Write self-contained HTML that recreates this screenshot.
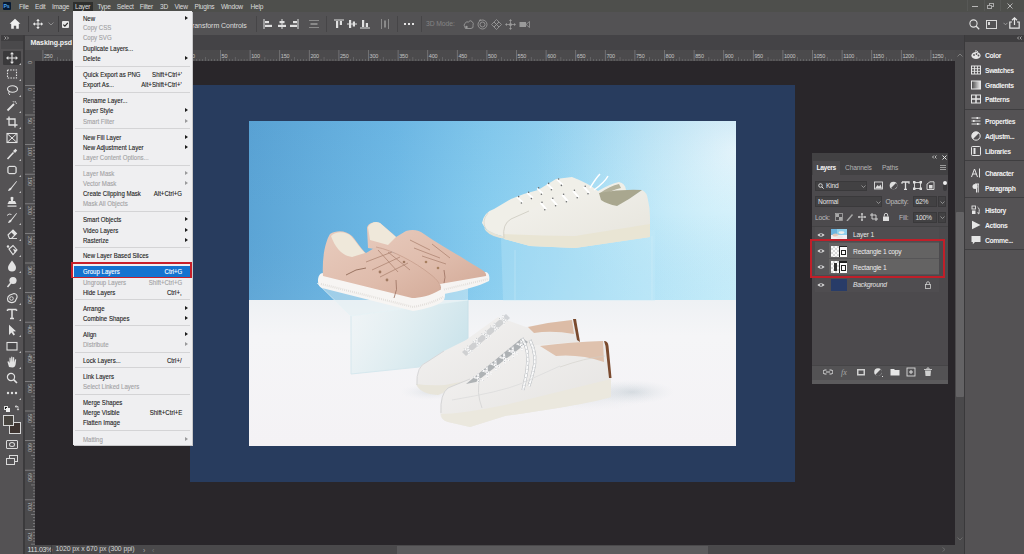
<!DOCTYPE html>
<html><head><meta charset="utf-8">
<style>
*{margin:0;padding:0;box-sizing:border-box}
html,body{width:1024px;height:554px;overflow:hidden;background:#29262a;font-family:"Liberation Sans",sans-serif;position:relative}
.a{position:absolute}
#menubar{left:0;top:0;width:1024px;height:12px;background:#4e4f4c}
#opts{left:0;top:12px;width:1024px;height:23px;background:#535254}
#tabbar{left:24px;top:35px;width:941px;height:15px;background:#444346}
#toolbar{left:0;top:35px;width:23px;height:519px;background:#545254}
#tbgap{left:23px;top:35px;width:2px;height:519px;background:#3b3a3c}
#hruler{left:25px;top:50px;width:939px;height:11px;background:#4b4a4c}
#vruler{left:25px;top:61px;width:10px;height:484px;background:#4b4a4c}
#canvas{left:35px;top:61px;width:920px;height:484px;background:#29262a}
#status{left:25px;top:545px;width:930px;height:9px;background:#4a494b}
#vscroll{left:955px;top:50px;width:9px;height:504px;background:#4a494b}
#vsep{left:964px;top:35px;width:1px;height:519px;background:#3a393b}
#rpanel{left:965px;top:42px;width:59px;height:512px;background:#545254}
#rhead{left:965px;top:35px;width:59px;height:7px;background:#3f3e40}
#doc{left:190px;top:85px;width:605px;height:397px;background:#283c5e}
#photo{left:249px;top:121px;width:487px;height:325px;overflow:hidden}
#menu{left:73px;top:11px;width:119px;height:434px;background:#efeff1;box-shadow:1px 1px 0 #c8c8ca}
.mi{position:absolute;left:10px;font-size:7.3px;transform:scaleX(.83);transform-origin:0 0;-webkit-text-stroke:0.12px currentColor;color:#1c1c1c;white-space:nowrap;line-height:10px;height:10px}
.mi.d,.sc.d{color:#a2a2a4}
.mi.w,.sc.w{color:#ffffff}
.sc{position:absolute;right:10px;font-size:7.3px;transform:scaleX(.83);transform-origin:100% 0;-webkit-text-stroke:0.12px currentColor;color:#1c1c1c;line-height:10px;white-space:nowrap}
.sep{position:absolute;left:2px;width:115px;height:1px;background:#d4d4d6}
.arr{position:absolute;left:112px;width:0;height:0;border-left:3px solid #1c1c1c;border-top:2.5px solid transparent;border-bottom:2.5px solid transparent}
.arr.d{border-left-color:#9a9a9c}
#layers{left:812px;top:153px;width:136px;height:231px;background:#4d4b4e}
.t{position:absolute;white-space:nowrap;line-height:1}

</style></head><body>
<div id="menubar" class="a"></div>
<div id="opts" class="a"></div>
<div id="tabbar" class="a"></div>
<div id="toolbar" class="a"></div>
<div id="tbgap" class="a"></div>
<div id="hruler" class="a"></div>
<div id="vruler" class="a"></div>
<div id="canvas" class="a"></div>
<div id="status" class="a"></div>
<div id="vscroll" class="a"></div>
<div id="vsep" class="a"></div>
<div id="rhead" class="a"></div>
<div id="rpanel" class="a"></div>
<div id="doc" class="a"></div>
<div class="a" style="left:3px;top:2px;width:8px;height:8px;background:#071a33;border-radius:1px"></div>
<div class="t" style="left:3.60px;top:4.34px;font-size:5.20px;color:#4fa6ee;font-weight:700;letter-spacing:-0.20px;">Ps</div>
<div class="t" style="left:19.00px;top:3.77px;font-size:6.60px;color:#dcdcdc;font-weight:400;letter-spacing:-0.25px;">File</div>
<div class="t" style="left:35.00px;top:3.77px;font-size:6.60px;color:#dcdcdc;font-weight:400;letter-spacing:-0.25px;">Edit</div>
<div class="t" style="left:52.00px;top:3.77px;font-size:6.60px;color:#dcdcdc;font-weight:400;letter-spacing:-0.25px;">Image</div>
<div class="t" style="left:97.40px;top:3.77px;font-size:6.60px;color:#dcdcdc;font-weight:400;letter-spacing:-0.25px;">Type</div>
<div class="t" style="left:116.80px;top:3.77px;font-size:6.60px;color:#dcdcdc;font-weight:400;letter-spacing:-0.25px;">Select</div>
<div class="t" style="left:139.80px;top:3.77px;font-size:6.60px;color:#dcdcdc;font-weight:400;letter-spacing:-0.25px;">Filter</div>
<div class="t" style="left:160.00px;top:3.77px;font-size:6.60px;color:#dcdcdc;font-weight:400;letter-spacing:-0.25px;">3D</div>
<div class="t" style="left:174.60px;top:3.77px;font-size:6.60px;color:#dcdcdc;font-weight:400;letter-spacing:-0.25px;">View</div>
<div class="t" style="left:194.50px;top:3.77px;font-size:6.60px;color:#dcdcdc;font-weight:400;letter-spacing:-0.25px;">Plugins</div>
<div class="t" style="left:220.90px;top:3.77px;font-size:6.60px;color:#dcdcdc;font-weight:400;letter-spacing:-0.25px;">Window</div>
<div class="t" style="left:250.50px;top:3.77px;font-size:6.60px;color:#dcdcdc;font-weight:400;letter-spacing:-0.25px;">Help</div>
<div class="a" style="left:73px;top:2px;width:20px;height:9px;background:#2e2f2d"></div>
<div class="t" style="left:75.00px;top:3.77px;font-size:6.60px;color:#dcdcdc;font-weight:400;letter-spacing:-0.25px;">Layer</div>
<div class="a" style="left:972px;top:6px;width:6px;height:1px;background:#b8b8b8"></div>
<div class="a" style="left:989px;top:3px;width:5px;height:4px;border:1px solid #a8a8a8"></div>
<div class="a" style="left:987px;top:5px;width:5px;height:4px;border:1px solid #a8a8a8;background:#4e4f4c"></div>
<svg class="a" style="left:1006px;top:2px" width="8" height="8"><path d="M1.5,1.5 L6.5,6.5 M6.5,1.5 L1.5,6.5" stroke="#c0c0c0" stroke-width="0.9"/></svg>
<div class="a" style="left:967px;top:0;width:1px;height:11px;background:#575856"></div>
<div class="a" style="left:984px;top:0;width:1px;height:11px;background:#575856"></div>
<div class="a" style="left:1000px;top:0;width:1px;height:11px;background:#575856"></div>
<svg class="a" style="left:9px;top:18px" width="12" height="12" viewBox="0 0 12 12"><path d="M6,0.8 L11.4,5.8 L9.8,5.8 L9.8,10.8 L7.2,10.8 L7.2,7.8 L4.8,7.8 L4.8,10.8 L2.2,10.8 L2.2,5.8 L0.6,5.8 Z" fill="#f0f0f0"/></svg>
<div class="a" style="left:28px;top:16px;width:1px;height:16px;background:#3f3e40"></div>
<svg class="a" style="left:33px;top:19px" width="10" height="10" viewBox="0 0 10 10"><path d="M5,0.5 L5,9.5 M0.5,5 L9.5,5" stroke="#e8e8e8" stroke-width="1"/><path d="M5,0 L3.2,2 L6.8,2 Z M5,10 L3.2,8 L6.8,8 Z M0,5 L2,3.2 L2,6.8 Z M10,5 L8,3.2 L8,6.8 Z" fill="#e8e8e8"/></svg>
<svg class="a" style="left:48px;top:22px" width="6" height="4"><path d="M0.5,0.5 L3,3 L5.5,0.5" stroke="#9a9a9a" stroke-width="0.8" fill="none"/></svg>
<div class="a" style="left:58px;top:16px;width:1px;height:16px;background:#3f3e40"></div>
<div class="a" style="left:62px;top:20.5px;width:7px;height:7px;background:#e8e8e8;border-radius:1px"></div>
<svg class="a" style="left:62px;top:20.5px" width="7" height="7"><path d="M1.3,3.6 L2.9,5.2 L5.8,1.8" stroke="#2a2a2a" stroke-width="1.2" fill="none"/></svg>
<div class="t" style="left:188.00px;top:21.65px;font-size:7.00px;color:#dedede;font-weight:400;letter-spacing:-0.05px;">Transform Controls</div>
<div class="a" style="left:255.5px;top:16px;width:1px;height:16px;background:#464547"></div>
<div class="a" style="left:326.0px;top:16px;width:1px;height:16px;background:#464547"></div>
<div class="a" style="left:397.0px;top:16px;width:1px;height:16px;background:#464547"></div>
<div class="a" style="left:421.0px;top:16px;width:1px;height:16px;background:#464547"></div>
<svg class="a" style="left:263px;top:19px" width="10" height="10" viewBox="0 0 10 10"><rect x="0.5" y="0" width="1" height="10" fill="#e0e0e0"/><rect x="2" y="2" width="4" height="2.2" fill="#e0e0e0"/><rect x="2" y="5.8" width="7" height="2.2" fill="#e0e0e0"/></svg>
<svg class="a" style="left:277px;top:19px" width="10" height="10" viewBox="0 0 10 10"><rect x="4.5" y="0" width="1" height="10" fill="#e0e0e0"/><rect x="2.5" y="2" width="5" height="2.2" fill="#e0e0e0"/><rect x="1" y="5.8" width="8" height="2.2" fill="#e0e0e0"/></svg>
<svg class="a" style="left:289px;top:19px" width="10" height="10" viewBox="0 0 10 10"><rect x="8.5" y="0" width="1" height="10" fill="#e0e0e0"/><rect x="4" y="2" width="4" height="2.2" fill="#e0e0e0"/><rect x="1" y="5.8" width="7" height="2.2" fill="#e0e0e0"/></svg>
<svg class="a" style="left:309px;top:19px" width="10" height="10" viewBox="0 0 10 10"><rect x="0" y="1" width="10" height="1" fill="#8a8a8a"/><rect x="1.5" y="4" width="7" height="2" fill="#8a8a8a"/><rect x="0" y="8" width="10" height="1" fill="#8a8a8a"/></svg>
<svg class="a" style="left:334px;top:19px" width="10" height="10" viewBox="0 0 10 10"><rect x="0" y="0.5" width="10" height="1" fill="#e0e0e0"/><rect x="2" y="2" width="2.2" height="7" fill="#e0e0e0"/><rect x="5.8" y="2" width="2.2" height="4" fill="#e0e0e0"/></svg>
<svg class="a" style="left:347px;top:19px" width="10" height="10" viewBox="0 0 10 10"><rect x="0" y="4.5" width="10" height="1" fill="#e0e0e0"/><rect x="2" y="1" width="2.2" height="8" fill="#e0e0e0"/><rect x="5.8" y="2.5" width="2.2" height="5" fill="#e0e0e0"/></svg>
<svg class="a" style="left:360px;top:19px" width="10" height="10" viewBox="0 0 10 10"><rect x="0" y="8.5" width="10" height="1" fill="#e0e0e0"/><rect x="2" y="1" width="2.2" height="7" fill="#e0e0e0"/><rect x="5.8" y="4" width="2.2" height="4" fill="#e0e0e0"/></svg>
<svg class="a" style="left:380px;top:19px" width="10" height="10" viewBox="0 0 10 10"><rect x="1" y="0" width="1" height="10" fill="#8a8a8a"/><rect x="4" y="1.5" width="2" height="7" fill="#8a8a8a"/><rect x="8" y="0" width="1" height="10" fill="#8a8a8a"/></svg>
<div class="a" style="left:404.0px;top:23px;width:2px;height:2px;background:#e4e4e4"></div>
<div class="a" style="left:408.0px;top:23px;width:2px;height:2px;background:#e4e4e4"></div>
<div class="a" style="left:412.0px;top:23px;width:2px;height:2px;background:#e4e4e4"></div>
<div class="t" style="left:426.00px;top:21.26px;font-size:6.80px;color:#848484;font-weight:400;letter-spacing:-0.10px;">3D Mode:</div>
<svg class="a" style="left:463px;top:18.5px" width="11" height="11" viewBox="0 0 11 11"><path d="M2,8 Q0,6 2,4.5 Q3,2 5.5,3 Q7,0.5 9,2.5 Q11,4 10,6.5 Q11,9 8,9.5 L3,9.5 Q1.5,9.5 2,8 Z" stroke="#9a9a9a" stroke-width="0.9" fill="none"/><circle cx="3.5" cy="8" r="1.2" fill="#9a9a9a"/></svg>
<svg class="a" style="left:477px;top:18.5px" width="11" height="11" viewBox="0 0 11 11"><circle cx="5.5" cy="5.5" r="4.5" stroke="#9a9a9a" stroke-width="0.9" fill="none"/><circle cx="5.5" cy="5.5" r="2.5" stroke="#9a9a9a" stroke-width="0.9" fill="none"/><path d="M2,1.5 L4,0.8" stroke="#9a9a9a" stroke-width="1"/></svg>
<svg class="a" style="left:491px;top:18.5px" width="11" height="11" viewBox="0 0 11 11"><path d="M5.5,0.5 L8,3 L5.5,5.5 L3,3 Z M5.5,5.5 L8,8 L5.5,10.5 L3,8 Z M0.5,5.5 L3,3 L5.5,5.5 L3,8 Z M10.5,5.5 L8,3 L5.5,5.5 L8,8 Z" stroke="#9a9a9a" stroke-width="0.8" fill="none"/></svg>
<svg class="a" style="left:505px;top:18.5px" width="11" height="11" viewBox="0 0 11 11"><path d="M5.5,1 L5.5,10 M1,5.5 L10,5.5" stroke="#9a9a9a" stroke-width="0.8"/><path d="M5.5,0 L4,2 L7,2 Z M5.5,11 L4,9 L7,9 Z M0,5.5 L2,4 L2,7 Z M11,5.5 L9,4 L9,7 Z" fill="#9a9a9a"/><circle cx="5.5" cy="5.5" r="1.5" fill="#9a9a9a"/></svg>
<svg class="a" style="left:519px;top:18.5px" width="11" height="11" viewBox="0 0 11 11"><rect x="0.5" y="3" width="6.5" height="5" fill="#9a9a9a"/><path d="M7,5.5 L10.5,2.5 L10.5,8.5 Z" stroke="#9a9a9a" stroke-width="0.8" fill="none"/></svg>
<svg class="a" style="left:969px;top:19px" width="11" height="11" viewBox="0 0 11 11"><circle cx="4.5" cy="4.5" r="3.6" stroke="#e0e0e0" stroke-width="1.1" fill="none"/><path d="M7,7 L10.2,10.2" stroke="#e0e0e0" stroke-width="1.3"/></svg>
<div class="a" style="left:986px;top:20px;width:11px;height:9px;border:1.2px solid #d8d8d8;background:#535254"></div>
<div class="a" style="left:988px;top:22px;width:2px;height:3px;background:#d8d8d8"></div>
<svg class="a" style="left:1003px;top:22px" width="5" height="4"><path d="M0.5,0.8 L2.5,2.8 L4.5,0.8" stroke="#aaa" stroke-width="0.8" fill="none"/></svg>
<svg class="a" style="left:1009px;top:17px" width="11" height="12" viewBox="0 0 11 12"><path d="M3,5 L0.8,5 L0.8,11.2 L10.2,11.2 L10.2,5 L8,5" stroke="#e8e8e8" stroke-width="1.2" fill="none"/><path d="M5.5,8 L5.5,1 M3,3.2 L5.5,0.8 L8,3.2" stroke="#e8e8e8" stroke-width="1.2" fill="none"/></svg>
<div class="a" style="left:955.5px;top:212px;width:8px;height:185px;background:#646365;border-radius:1px"></div>
<svg class="a" style="left:957px;top:53px" width="6" height="4"><path d="M0.5,3.5 L3,1 L5.5,3.5" stroke="#8a8a8a" stroke-width="0.8" fill="none"/></svg>
<div class="a" style="left:25px;top:36px;width:51px;height:14px;background:#535254"></div>
<div class="t" style="left:30.60px;top:39.15px;font-size:7.00px;color:#f2f2f2;font-weight:700;letter-spacing:-0.10px;">Masking.psd</div>
<div class="a" style="left:1px;top:35px;width:22px;height:6px;background:#3f3e40"></div>
<svg class="a" style="left:4px;top:36px" width="6" height="4"><path d="M0.5,0.5 L2,2 L0.5,3.5 M3,0.5 L4.5,2 L3,3.5" stroke="#c8c8c8" stroke-width="0.7" fill="none"/></svg>
<div class="a" style="left:1px;top:41px;width:22px;height:8px;background:#4a494b"></div>
<svg class="a" style="left:0;top:50px" width="955" height="11"><rect x="42.5" y="0" width="0.8" height="11" fill="#7c7b7d"/><rect x="45.5" y="9.0" width="0.7" height="2" fill="#6e6d6f"/><rect x="48.4" y="9.0" width="0.7" height="2" fill="#6e6d6f"/><rect x="51.4" y="9.0" width="0.7" height="2" fill="#6e6d6f"/><rect x="54.3" y="9.0" width="0.7" height="2" fill="#6e6d6f"/><rect x="57.3" y="7.0" width="0.7" height="4" fill="#6e6d6f"/><rect x="60.3" y="9.0" width="0.7" height="2" fill="#6e6d6f"/><rect x="63.2" y="9.0" width="0.7" height="2" fill="#6e6d6f"/><rect x="66.2" y="9.0" width="0.7" height="2" fill="#6e6d6f"/><rect x="69.1" y="9.0" width="0.7" height="2" fill="#6e6d6f"/><rect x="72.1" y="0" width="0.8" height="11" fill="#7c7b7d"/><rect x="75.1" y="9.0" width="0.7" height="2" fill="#6e6d6f"/><rect x="78.0" y="9.0" width="0.7" height="2" fill="#6e6d6f"/><rect x="81.0" y="9.0" width="0.7" height="2" fill="#6e6d6f"/><rect x="83.9" y="9.0" width="0.7" height="2" fill="#6e6d6f"/><rect x="86.9" y="7.0" width="0.7" height="4" fill="#6e6d6f"/><rect x="89.9" y="9.0" width="0.7" height="2" fill="#6e6d6f"/><rect x="92.8" y="9.0" width="0.7" height="2" fill="#6e6d6f"/><rect x="95.8" y="9.0" width="0.7" height="2" fill="#6e6d6f"/><rect x="98.7" y="9.0" width="0.7" height="2" fill="#6e6d6f"/><rect x="101.7" y="0" width="0.8" height="11" fill="#7c7b7d"/><rect x="104.7" y="9.0" width="0.7" height="2" fill="#6e6d6f"/><rect x="107.6" y="9.0" width="0.7" height="2" fill="#6e6d6f"/><rect x="110.6" y="9.0" width="0.7" height="2" fill="#6e6d6f"/><rect x="113.5" y="9.0" width="0.7" height="2" fill="#6e6d6f"/><rect x="116.5" y="7.0" width="0.7" height="4" fill="#6e6d6f"/><rect x="119.5" y="9.0" width="0.7" height="2" fill="#6e6d6f"/><rect x="122.4" y="9.0" width="0.7" height="2" fill="#6e6d6f"/><rect x="125.4" y="9.0" width="0.7" height="2" fill="#6e6d6f"/><rect x="128.3" y="9.0" width="0.7" height="2" fill="#6e6d6f"/><rect x="131.3" y="0" width="0.8" height="11" fill="#7c7b7d"/><rect x="134.3" y="9.0" width="0.7" height="2" fill="#6e6d6f"/><rect x="137.2" y="9.0" width="0.7" height="2" fill="#6e6d6f"/><rect x="140.2" y="9.0" width="0.7" height="2" fill="#6e6d6f"/><rect x="143.1" y="9.0" width="0.7" height="2" fill="#6e6d6f"/><rect x="146.1" y="7.0" width="0.7" height="4" fill="#6e6d6f"/><rect x="149.1" y="9.0" width="0.7" height="2" fill="#6e6d6f"/><rect x="152.0" y="9.0" width="0.7" height="2" fill="#6e6d6f"/><rect x="155.0" y="9.0" width="0.7" height="2" fill="#6e6d6f"/><rect x="157.9" y="9.0" width="0.7" height="2" fill="#6e6d6f"/><rect x="160.9" y="0" width="0.8" height="11" fill="#7c7b7d"/><rect x="163.9" y="9.0" width="0.7" height="2" fill="#6e6d6f"/><rect x="166.8" y="9.0" width="0.7" height="2" fill="#6e6d6f"/><rect x="169.8" y="9.0" width="0.7" height="2" fill="#6e6d6f"/><rect x="172.7" y="9.0" width="0.7" height="2" fill="#6e6d6f"/><rect x="175.7" y="7.0" width="0.7" height="4" fill="#6e6d6f"/><rect x="178.7" y="9.0" width="0.7" height="2" fill="#6e6d6f"/><rect x="181.6" y="9.0" width="0.7" height="2" fill="#6e6d6f"/><rect x="184.6" y="9.0" width="0.7" height="2" fill="#6e6d6f"/><rect x="187.5" y="9.0" width="0.7" height="2" fill="#6e6d6f"/><rect x="190.5" y="0" width="0.8" height="11" fill="#7c7b7d"/><rect x="193.5" y="9.0" width="0.7" height="2" fill="#6e6d6f"/><rect x="196.4" y="9.0" width="0.7" height="2" fill="#6e6d6f"/><rect x="199.4" y="9.0" width="0.7" height="2" fill="#6e6d6f"/><rect x="202.3" y="9.0" width="0.7" height="2" fill="#6e6d6f"/><rect x="205.3" y="7.0" width="0.7" height="4" fill="#6e6d6f"/><rect x="208.3" y="9.0" width="0.7" height="2" fill="#6e6d6f"/><rect x="211.2" y="9.0" width="0.7" height="2" fill="#6e6d6f"/><rect x="214.2" y="9.0" width="0.7" height="2" fill="#6e6d6f"/><rect x="217.1" y="9.0" width="0.7" height="2" fill="#6e6d6f"/><rect x="220.1" y="0" width="0.8" height="11" fill="#7c7b7d"/><rect x="223.1" y="9.0" width="0.7" height="2" fill="#6e6d6f"/><rect x="226.0" y="9.0" width="0.7" height="2" fill="#6e6d6f"/><rect x="229.0" y="9.0" width="0.7" height="2" fill="#6e6d6f"/><rect x="231.9" y="9.0" width="0.7" height="2" fill="#6e6d6f"/><rect x="234.9" y="7.0" width="0.7" height="4" fill="#6e6d6f"/><rect x="237.9" y="9.0" width="0.7" height="2" fill="#6e6d6f"/><rect x="240.8" y="9.0" width="0.7" height="2" fill="#6e6d6f"/><rect x="243.8" y="9.0" width="0.7" height="2" fill="#6e6d6f"/><rect x="246.7" y="9.0" width="0.7" height="2" fill="#6e6d6f"/><rect x="249.7" y="0" width="0.8" height="11" fill="#7c7b7d"/><rect x="252.7" y="9.0" width="0.7" height="2" fill="#6e6d6f"/><rect x="255.6" y="9.0" width="0.7" height="2" fill="#6e6d6f"/><rect x="258.6" y="9.0" width="0.7" height="2" fill="#6e6d6f"/><rect x="261.5" y="9.0" width="0.7" height="2" fill="#6e6d6f"/><rect x="264.5" y="7.0" width="0.7" height="4" fill="#6e6d6f"/><rect x="267.5" y="9.0" width="0.7" height="2" fill="#6e6d6f"/><rect x="270.4" y="9.0" width="0.7" height="2" fill="#6e6d6f"/><rect x="273.4" y="9.0" width="0.7" height="2" fill="#6e6d6f"/><rect x="276.3" y="9.0" width="0.7" height="2" fill="#6e6d6f"/><rect x="279.3" y="0" width="0.8" height="11" fill="#7c7b7d"/><rect x="282.3" y="9.0" width="0.7" height="2" fill="#6e6d6f"/><rect x="285.2" y="9.0" width="0.7" height="2" fill="#6e6d6f"/><rect x="288.2" y="9.0" width="0.7" height="2" fill="#6e6d6f"/><rect x="291.1" y="9.0" width="0.7" height="2" fill="#6e6d6f"/><rect x="294.1" y="7.0" width="0.7" height="4" fill="#6e6d6f"/><rect x="297.1" y="9.0" width="0.7" height="2" fill="#6e6d6f"/><rect x="300.0" y="9.0" width="0.7" height="2" fill="#6e6d6f"/><rect x="303.0" y="9.0" width="0.7" height="2" fill="#6e6d6f"/><rect x="305.9" y="9.0" width="0.7" height="2" fill="#6e6d6f"/><rect x="308.9" y="0" width="0.8" height="11" fill="#7c7b7d"/><rect x="311.9" y="9.0" width="0.7" height="2" fill="#6e6d6f"/><rect x="314.8" y="9.0" width="0.7" height="2" fill="#6e6d6f"/><rect x="317.8" y="9.0" width="0.7" height="2" fill="#6e6d6f"/><rect x="320.7" y="9.0" width="0.7" height="2" fill="#6e6d6f"/><rect x="323.7" y="7.0" width="0.7" height="4" fill="#6e6d6f"/><rect x="326.7" y="9.0" width="0.7" height="2" fill="#6e6d6f"/><rect x="329.6" y="9.0" width="0.7" height="2" fill="#6e6d6f"/><rect x="332.6" y="9.0" width="0.7" height="2" fill="#6e6d6f"/><rect x="335.5" y="9.0" width="0.7" height="2" fill="#6e6d6f"/><rect x="338.5" y="0" width="0.8" height="11" fill="#7c7b7d"/><rect x="341.5" y="9.0" width="0.7" height="2" fill="#6e6d6f"/><rect x="344.4" y="9.0" width="0.7" height="2" fill="#6e6d6f"/><rect x="347.4" y="9.0" width="0.7" height="2" fill="#6e6d6f"/><rect x="350.3" y="9.0" width="0.7" height="2" fill="#6e6d6f"/><rect x="353.3" y="7.0" width="0.7" height="4" fill="#6e6d6f"/><rect x="356.3" y="9.0" width="0.7" height="2" fill="#6e6d6f"/><rect x="359.2" y="9.0" width="0.7" height="2" fill="#6e6d6f"/><rect x="362.2" y="9.0" width="0.7" height="2" fill="#6e6d6f"/><rect x="365.1" y="9.0" width="0.7" height="2" fill="#6e6d6f"/><rect x="368.1" y="0" width="0.8" height="11" fill="#7c7b7d"/><rect x="371.1" y="9.0" width="0.7" height="2" fill="#6e6d6f"/><rect x="374.0" y="9.0" width="0.7" height="2" fill="#6e6d6f"/><rect x="377.0" y="9.0" width="0.7" height="2" fill="#6e6d6f"/><rect x="379.9" y="9.0" width="0.7" height="2" fill="#6e6d6f"/><rect x="382.9" y="7.0" width="0.7" height="4" fill="#6e6d6f"/><rect x="385.9" y="9.0" width="0.7" height="2" fill="#6e6d6f"/><rect x="388.8" y="9.0" width="0.7" height="2" fill="#6e6d6f"/><rect x="391.8" y="9.0" width="0.7" height="2" fill="#6e6d6f"/><rect x="394.7" y="9.0" width="0.7" height="2" fill="#6e6d6f"/><rect x="397.7" y="0" width="0.8" height="11" fill="#7c7b7d"/><rect x="400.7" y="9.0" width="0.7" height="2" fill="#6e6d6f"/><rect x="403.6" y="9.0" width="0.7" height="2" fill="#6e6d6f"/><rect x="406.6" y="9.0" width="0.7" height="2" fill="#6e6d6f"/><rect x="409.5" y="9.0" width="0.7" height="2" fill="#6e6d6f"/><rect x="412.5" y="7.0" width="0.7" height="4" fill="#6e6d6f"/><rect x="415.5" y="9.0" width="0.7" height="2" fill="#6e6d6f"/><rect x="418.4" y="9.0" width="0.7" height="2" fill="#6e6d6f"/><rect x="421.4" y="9.0" width="0.7" height="2" fill="#6e6d6f"/><rect x="424.3" y="9.0" width="0.7" height="2" fill="#6e6d6f"/><rect x="427.3" y="0" width="0.8" height="11" fill="#7c7b7d"/><rect x="430.3" y="9.0" width="0.7" height="2" fill="#6e6d6f"/><rect x="433.2" y="9.0" width="0.7" height="2" fill="#6e6d6f"/><rect x="436.2" y="9.0" width="0.7" height="2" fill="#6e6d6f"/><rect x="439.1" y="9.0" width="0.7" height="2" fill="#6e6d6f"/><rect x="442.1" y="7.0" width="0.7" height="4" fill="#6e6d6f"/><rect x="445.1" y="9.0" width="0.7" height="2" fill="#6e6d6f"/><rect x="448.0" y="9.0" width="0.7" height="2" fill="#6e6d6f"/><rect x="451.0" y="9.0" width="0.7" height="2" fill="#6e6d6f"/><rect x="453.9" y="9.0" width="0.7" height="2" fill="#6e6d6f"/><rect x="456.9" y="0" width="0.8" height="11" fill="#7c7b7d"/><rect x="459.9" y="9.0" width="0.7" height="2" fill="#6e6d6f"/><rect x="462.8" y="9.0" width="0.7" height="2" fill="#6e6d6f"/><rect x="465.8" y="9.0" width="0.7" height="2" fill="#6e6d6f"/><rect x="468.7" y="9.0" width="0.7" height="2" fill="#6e6d6f"/><rect x="471.7" y="7.0" width="0.7" height="4" fill="#6e6d6f"/><rect x="474.7" y="9.0" width="0.7" height="2" fill="#6e6d6f"/><rect x="477.6" y="9.0" width="0.7" height="2" fill="#6e6d6f"/><rect x="480.6" y="9.0" width="0.7" height="2" fill="#6e6d6f"/><rect x="483.5" y="9.0" width="0.7" height="2" fill="#6e6d6f"/><rect x="486.5" y="0" width="0.8" height="11" fill="#7c7b7d"/><rect x="489.5" y="9.0" width="0.7" height="2" fill="#6e6d6f"/><rect x="492.4" y="9.0" width="0.7" height="2" fill="#6e6d6f"/><rect x="495.4" y="9.0" width="0.7" height="2" fill="#6e6d6f"/><rect x="498.3" y="9.0" width="0.7" height="2" fill="#6e6d6f"/><rect x="501.3" y="7.0" width="0.7" height="4" fill="#6e6d6f"/><rect x="504.3" y="9.0" width="0.7" height="2" fill="#6e6d6f"/><rect x="507.2" y="9.0" width="0.7" height="2" fill="#6e6d6f"/><rect x="510.2" y="9.0" width="0.7" height="2" fill="#6e6d6f"/><rect x="513.1" y="9.0" width="0.7" height="2" fill="#6e6d6f"/><rect x="516.1" y="0" width="0.8" height="11" fill="#7c7b7d"/><rect x="519.1" y="9.0" width="0.7" height="2" fill="#6e6d6f"/><rect x="522.0" y="9.0" width="0.7" height="2" fill="#6e6d6f"/><rect x="525.0" y="9.0" width="0.7" height="2" fill="#6e6d6f"/><rect x="527.9" y="9.0" width="0.7" height="2" fill="#6e6d6f"/><rect x="530.9" y="7.0" width="0.7" height="4" fill="#6e6d6f"/><rect x="533.9" y="9.0" width="0.7" height="2" fill="#6e6d6f"/><rect x="536.8" y="9.0" width="0.7" height="2" fill="#6e6d6f"/><rect x="539.8" y="9.0" width="0.7" height="2" fill="#6e6d6f"/><rect x="542.7" y="9.0" width="0.7" height="2" fill="#6e6d6f"/><rect x="545.7" y="0" width="0.8" height="11" fill="#7c7b7d"/><rect x="548.7" y="9.0" width="0.7" height="2" fill="#6e6d6f"/><rect x="551.6" y="9.0" width="0.7" height="2" fill="#6e6d6f"/><rect x="554.6" y="9.0" width="0.7" height="2" fill="#6e6d6f"/><rect x="557.5" y="9.0" width="0.7" height="2" fill="#6e6d6f"/><rect x="560.5" y="7.0" width="0.7" height="4" fill="#6e6d6f"/><rect x="563.5" y="9.0" width="0.7" height="2" fill="#6e6d6f"/><rect x="566.4" y="9.0" width="0.7" height="2" fill="#6e6d6f"/><rect x="569.4" y="9.0" width="0.7" height="2" fill="#6e6d6f"/><rect x="572.3" y="9.0" width="0.7" height="2" fill="#6e6d6f"/><rect x="575.3" y="0" width="0.8" height="11" fill="#7c7b7d"/><rect x="578.3" y="9.0" width="0.7" height="2" fill="#6e6d6f"/><rect x="581.2" y="9.0" width="0.7" height="2" fill="#6e6d6f"/><rect x="584.2" y="9.0" width="0.7" height="2" fill="#6e6d6f"/><rect x="587.1" y="9.0" width="0.7" height="2" fill="#6e6d6f"/><rect x="590.1" y="7.0" width="0.7" height="4" fill="#6e6d6f"/><rect x="593.1" y="9.0" width="0.7" height="2" fill="#6e6d6f"/><rect x="596.0" y="9.0" width="0.7" height="2" fill="#6e6d6f"/><rect x="599.0" y="9.0" width="0.7" height="2" fill="#6e6d6f"/><rect x="601.9" y="9.0" width="0.7" height="2" fill="#6e6d6f"/><rect x="604.9" y="0" width="0.8" height="11" fill="#7c7b7d"/><rect x="607.9" y="9.0" width="0.7" height="2" fill="#6e6d6f"/><rect x="610.8" y="9.0" width="0.7" height="2" fill="#6e6d6f"/><rect x="613.8" y="9.0" width="0.7" height="2" fill="#6e6d6f"/><rect x="616.7" y="9.0" width="0.7" height="2" fill="#6e6d6f"/><rect x="619.7" y="7.0" width="0.7" height="4" fill="#6e6d6f"/><rect x="622.7" y="9.0" width="0.7" height="2" fill="#6e6d6f"/><rect x="625.6" y="9.0" width="0.7" height="2" fill="#6e6d6f"/><rect x="628.6" y="9.0" width="0.7" height="2" fill="#6e6d6f"/><rect x="631.5" y="9.0" width="0.7" height="2" fill="#6e6d6f"/><rect x="634.5" y="0" width="0.8" height="11" fill="#7c7b7d"/><rect x="637.5" y="9.0" width="0.7" height="2" fill="#6e6d6f"/><rect x="640.4" y="9.0" width="0.7" height="2" fill="#6e6d6f"/><rect x="643.4" y="9.0" width="0.7" height="2" fill="#6e6d6f"/><rect x="646.3" y="9.0" width="0.7" height="2" fill="#6e6d6f"/><rect x="649.3" y="7.0" width="0.7" height="4" fill="#6e6d6f"/><rect x="652.3" y="9.0" width="0.7" height="2" fill="#6e6d6f"/><rect x="655.2" y="9.0" width="0.7" height="2" fill="#6e6d6f"/><rect x="658.2" y="9.0" width="0.7" height="2" fill="#6e6d6f"/><rect x="661.1" y="9.0" width="0.7" height="2" fill="#6e6d6f"/><rect x="664.1" y="0" width="0.8" height="11" fill="#7c7b7d"/><rect x="667.1" y="9.0" width="0.7" height="2" fill="#6e6d6f"/><rect x="670.0" y="9.0" width="0.7" height="2" fill="#6e6d6f"/><rect x="673.0" y="9.0" width="0.7" height="2" fill="#6e6d6f"/><rect x="675.9" y="9.0" width="0.7" height="2" fill="#6e6d6f"/><rect x="678.9" y="7.0" width="0.7" height="4" fill="#6e6d6f"/><rect x="681.9" y="9.0" width="0.7" height="2" fill="#6e6d6f"/><rect x="684.8" y="9.0" width="0.7" height="2" fill="#6e6d6f"/><rect x="687.8" y="9.0" width="0.7" height="2" fill="#6e6d6f"/><rect x="690.7" y="9.0" width="0.7" height="2" fill="#6e6d6f"/><rect x="693.7" y="0" width="0.8" height="11" fill="#7c7b7d"/><rect x="696.7" y="9.0" width="0.7" height="2" fill="#6e6d6f"/><rect x="699.6" y="9.0" width="0.7" height="2" fill="#6e6d6f"/><rect x="702.6" y="9.0" width="0.7" height="2" fill="#6e6d6f"/><rect x="705.5" y="9.0" width="0.7" height="2" fill="#6e6d6f"/><rect x="708.5" y="7.0" width="0.7" height="4" fill="#6e6d6f"/><rect x="711.5" y="9.0" width="0.7" height="2" fill="#6e6d6f"/><rect x="714.4" y="9.0" width="0.7" height="2" fill="#6e6d6f"/><rect x="717.4" y="9.0" width="0.7" height="2" fill="#6e6d6f"/><rect x="720.3" y="9.0" width="0.7" height="2" fill="#6e6d6f"/><rect x="723.3" y="0" width="0.8" height="11" fill="#7c7b7d"/><rect x="726.3" y="9.0" width="0.7" height="2" fill="#6e6d6f"/><rect x="729.2" y="9.0" width="0.7" height="2" fill="#6e6d6f"/><rect x="732.2" y="9.0" width="0.7" height="2" fill="#6e6d6f"/><rect x="735.1" y="9.0" width="0.7" height="2" fill="#6e6d6f"/><rect x="738.1" y="7.0" width="0.7" height="4" fill="#6e6d6f"/><rect x="741.1" y="9.0" width="0.7" height="2" fill="#6e6d6f"/><rect x="744.0" y="9.0" width="0.7" height="2" fill="#6e6d6f"/><rect x="747.0" y="9.0" width="0.7" height="2" fill="#6e6d6f"/><rect x="749.9" y="9.0" width="0.7" height="2" fill="#6e6d6f"/><rect x="752.9" y="0" width="0.8" height="11" fill="#7c7b7d"/><rect x="755.9" y="9.0" width="0.7" height="2" fill="#6e6d6f"/><rect x="758.8" y="9.0" width="0.7" height="2" fill="#6e6d6f"/><rect x="761.8" y="9.0" width="0.7" height="2" fill="#6e6d6f"/><rect x="764.7" y="9.0" width="0.7" height="2" fill="#6e6d6f"/><rect x="767.7" y="7.0" width="0.7" height="4" fill="#6e6d6f"/><rect x="770.7" y="9.0" width="0.7" height="2" fill="#6e6d6f"/><rect x="773.6" y="9.0" width="0.7" height="2" fill="#6e6d6f"/><rect x="776.6" y="9.0" width="0.7" height="2" fill="#6e6d6f"/><rect x="779.5" y="9.0" width="0.7" height="2" fill="#6e6d6f"/><rect x="782.5" y="0" width="0.8" height="11" fill="#7c7b7d"/><rect x="785.5" y="9.0" width="0.7" height="2" fill="#6e6d6f"/><rect x="788.4" y="9.0" width="0.7" height="2" fill="#6e6d6f"/><rect x="791.4" y="9.0" width="0.7" height="2" fill="#6e6d6f"/><rect x="794.3" y="9.0" width="0.7" height="2" fill="#6e6d6f"/><rect x="797.3" y="7.0" width="0.7" height="4" fill="#6e6d6f"/><rect x="800.3" y="9.0" width="0.7" height="2" fill="#6e6d6f"/><rect x="803.2" y="9.0" width="0.7" height="2" fill="#6e6d6f"/><rect x="806.2" y="9.0" width="0.7" height="2" fill="#6e6d6f"/><rect x="809.1" y="9.0" width="0.7" height="2" fill="#6e6d6f"/><rect x="812.1" y="0" width="0.8" height="11" fill="#7c7b7d"/><rect x="815.1" y="9.0" width="0.7" height="2" fill="#6e6d6f"/><rect x="818.0" y="9.0" width="0.7" height="2" fill="#6e6d6f"/><rect x="821.0" y="9.0" width="0.7" height="2" fill="#6e6d6f"/><rect x="823.9" y="9.0" width="0.7" height="2" fill="#6e6d6f"/><rect x="826.9" y="7.0" width="0.7" height="4" fill="#6e6d6f"/><rect x="829.9" y="9.0" width="0.7" height="2" fill="#6e6d6f"/><rect x="832.8" y="9.0" width="0.7" height="2" fill="#6e6d6f"/><rect x="835.8" y="9.0" width="0.7" height="2" fill="#6e6d6f"/><rect x="838.7" y="9.0" width="0.7" height="2" fill="#6e6d6f"/><rect x="841.7" y="0" width="0.8" height="11" fill="#7c7b7d"/><rect x="844.7" y="9.0" width="0.7" height="2" fill="#6e6d6f"/><rect x="847.6" y="9.0" width="0.7" height="2" fill="#6e6d6f"/><rect x="850.6" y="9.0" width="0.7" height="2" fill="#6e6d6f"/><rect x="853.5" y="9.0" width="0.7" height="2" fill="#6e6d6f"/><rect x="856.5" y="7.0" width="0.7" height="4" fill="#6e6d6f"/><rect x="859.5" y="9.0" width="0.7" height="2" fill="#6e6d6f"/><rect x="862.4" y="9.0" width="0.7" height="2" fill="#6e6d6f"/><rect x="865.4" y="9.0" width="0.7" height="2" fill="#6e6d6f"/><rect x="868.3" y="9.0" width="0.7" height="2" fill="#6e6d6f"/><rect x="871.3" y="0" width="0.8" height="11" fill="#7c7b7d"/><rect x="874.3" y="9.0" width="0.7" height="2" fill="#6e6d6f"/><rect x="877.2" y="9.0" width="0.7" height="2" fill="#6e6d6f"/><rect x="880.2" y="9.0" width="0.7" height="2" fill="#6e6d6f"/><rect x="883.1" y="9.0" width="0.7" height="2" fill="#6e6d6f"/><rect x="886.1" y="7.0" width="0.7" height="4" fill="#6e6d6f"/><rect x="889.1" y="9.0" width="0.7" height="2" fill="#6e6d6f"/><rect x="892.0" y="9.0" width="0.7" height="2" fill="#6e6d6f"/><rect x="895.0" y="9.0" width="0.7" height="2" fill="#6e6d6f"/><rect x="897.9" y="9.0" width="0.7" height="2" fill="#6e6d6f"/><rect x="900.9" y="0" width="0.8" height="11" fill="#7c7b7d"/><rect x="903.9" y="9.0" width="0.7" height="2" fill="#6e6d6f"/><rect x="906.8" y="9.0" width="0.7" height="2" fill="#6e6d6f"/><rect x="909.8" y="9.0" width="0.7" height="2" fill="#6e6d6f"/><rect x="912.7" y="9.0" width="0.7" height="2" fill="#6e6d6f"/><rect x="915.7" y="7.0" width="0.7" height="4" fill="#6e6d6f"/><rect x="918.7" y="9.0" width="0.7" height="2" fill="#6e6d6f"/><rect x="921.6" y="9.0" width="0.7" height="2" fill="#6e6d6f"/><rect x="924.6" y="9.0" width="0.7" height="2" fill="#6e6d6f"/><rect x="927.5" y="9.0" width="0.7" height="2" fill="#6e6d6f"/><rect x="930.5" y="0" width="0.8" height="11" fill="#7c7b7d"/><rect x="933.5" y="9.0" width="0.7" height="2" fill="#6e6d6f"/><rect x="936.4" y="9.0" width="0.7" height="2" fill="#6e6d6f"/><rect x="939.4" y="9.0" width="0.7" height="2" fill="#6e6d6f"/><rect x="942.3" y="9.0" width="0.7" height="2" fill="#6e6d6f"/><rect x="945.3" y="7.0" width="0.7" height="4" fill="#6e6d6f"/><rect x="948.3" y="9.0" width="0.7" height="2" fill="#6e6d6f"/><rect x="951.2" y="9.0" width="0.7" height="2" fill="#6e6d6f"/></svg>
<div class="t" style="left:44.00px;top:54.18px;font-size:5.50px;color:#c4c4c4;font-weight:400;letter-spacing:-0.20px;">250</div>
<div class="t" style="left:73.60px;top:54.18px;font-size:5.50px;color:#c4c4c4;font-weight:400;letter-spacing:-0.20px;">200</div>
<div class="t" style="left:103.20px;top:54.18px;font-size:5.50px;color:#c4c4c4;font-weight:400;letter-spacing:-0.20px;">150</div>
<div class="t" style="left:132.80px;top:54.18px;font-size:5.50px;color:#c4c4c4;font-weight:400;letter-spacing:-0.20px;">100</div>
<div class="t" style="left:162.40px;top:54.18px;font-size:5.50px;color:#c4c4c4;font-weight:400;letter-spacing:-0.20px;">50</div>
<div class="t" style="left:192.00px;top:54.18px;font-size:5.50px;color:#c4c4c4;font-weight:400;letter-spacing:-0.20px;">0</div>
<div class="t" style="left:221.60px;top:54.18px;font-size:5.50px;color:#c4c4c4;font-weight:400;letter-spacing:-0.20px;">50</div>
<div class="t" style="left:251.20px;top:54.18px;font-size:5.50px;color:#c4c4c4;font-weight:400;letter-spacing:-0.20px;">100</div>
<div class="t" style="left:280.80px;top:54.18px;font-size:5.50px;color:#c4c4c4;font-weight:400;letter-spacing:-0.20px;">150</div>
<div class="t" style="left:310.40px;top:54.18px;font-size:5.50px;color:#c4c4c4;font-weight:400;letter-spacing:-0.20px;">200</div>
<div class="t" style="left:340.00px;top:54.18px;font-size:5.50px;color:#c4c4c4;font-weight:400;letter-spacing:-0.20px;">250</div>
<div class="t" style="left:369.60px;top:54.18px;font-size:5.50px;color:#c4c4c4;font-weight:400;letter-spacing:-0.20px;">300</div>
<div class="t" style="left:399.20px;top:54.18px;font-size:5.50px;color:#c4c4c4;font-weight:400;letter-spacing:-0.20px;">350</div>
<div class="t" style="left:428.80px;top:54.18px;font-size:5.50px;color:#c4c4c4;font-weight:400;letter-spacing:-0.20px;">400</div>
<div class="t" style="left:458.40px;top:54.18px;font-size:5.50px;color:#c4c4c4;font-weight:400;letter-spacing:-0.20px;">450</div>
<div class="t" style="left:488.00px;top:54.18px;font-size:5.50px;color:#c4c4c4;font-weight:400;letter-spacing:-0.20px;">500</div>
<div class="t" style="left:517.60px;top:54.18px;font-size:5.50px;color:#c4c4c4;font-weight:400;letter-spacing:-0.20px;">550</div>
<div class="t" style="left:547.20px;top:54.18px;font-size:5.50px;color:#c4c4c4;font-weight:400;letter-spacing:-0.20px;">600</div>
<div class="t" style="left:576.80px;top:54.18px;font-size:5.50px;color:#c4c4c4;font-weight:400;letter-spacing:-0.20px;">650</div>
<div class="t" style="left:606.40px;top:54.18px;font-size:5.50px;color:#c4c4c4;font-weight:400;letter-spacing:-0.20px;">700</div>
<div class="t" style="left:636.00px;top:54.18px;font-size:5.50px;color:#c4c4c4;font-weight:400;letter-spacing:-0.20px;">750</div>
<div class="t" style="left:665.60px;top:54.18px;font-size:5.50px;color:#c4c4c4;font-weight:400;letter-spacing:-0.20px;">800</div>
<div class="t" style="left:695.20px;top:54.18px;font-size:5.50px;color:#c4c4c4;font-weight:400;letter-spacing:-0.20px;">850</div>
<div class="t" style="left:724.80px;top:54.18px;font-size:5.50px;color:#c4c4c4;font-weight:400;letter-spacing:-0.20px;">900</div>
<div class="t" style="left:754.40px;top:54.18px;font-size:5.50px;color:#c4c4c4;font-weight:400;letter-spacing:-0.20px;">950</div>
<div class="t" style="left:784.00px;top:54.18px;font-size:5.50px;color:#c4c4c4;font-weight:400;letter-spacing:-0.20px;">1000</div>
<div class="t" style="left:813.60px;top:54.18px;font-size:5.50px;color:#c4c4c4;font-weight:400;letter-spacing:-0.20px;">1050</div>
<div class="t" style="left:843.20px;top:54.18px;font-size:5.50px;color:#c4c4c4;font-weight:400;letter-spacing:-0.20px;">1100</div>
<div class="t" style="left:872.80px;top:54.18px;font-size:5.50px;color:#c4c4c4;font-weight:400;letter-spacing:-0.20px;">1150</div>
<div class="t" style="left:902.40px;top:54.18px;font-size:5.50px;color:#c4c4c4;font-weight:400;letter-spacing:-0.20px;">1200</div>
<div class="t" style="left:932.00px;top:54.18px;font-size:5.50px;color:#c4c4c4;font-weight:400;letter-spacing:-0.20px;">1250</div>
<svg class="a" style="left:25px;top:0" width="10" height="554"><rect x="0" y="85.0" width="10" height="0.8" fill="#8a898b"/><rect x="8" y="88.0" width="2" height="0.7" fill="#8a898b"/><rect x="8" y="90.9" width="2" height="0.7" fill="#8a898b"/><rect x="8" y="93.9" width="2" height="0.7" fill="#8a898b"/><rect x="8" y="96.8" width="2" height="0.7" fill="#8a898b"/><rect x="6" y="99.8" width="4" height="0.7" fill="#8a898b"/><rect x="8" y="102.8" width="2" height="0.7" fill="#8a898b"/><rect x="8" y="105.7" width="2" height="0.7" fill="#8a898b"/><rect x="8" y="108.7" width="2" height="0.7" fill="#8a898b"/><rect x="8" y="111.6" width="2" height="0.7" fill="#8a898b"/><rect x="0" y="114.6" width="10" height="0.8" fill="#8a898b"/><rect x="8" y="117.6" width="2" height="0.7" fill="#8a898b"/><rect x="8" y="120.5" width="2" height="0.7" fill="#8a898b"/><rect x="8" y="123.5" width="2" height="0.7" fill="#8a898b"/><rect x="8" y="126.4" width="2" height="0.7" fill="#8a898b"/><rect x="6" y="129.4" width="4" height="0.7" fill="#8a898b"/><rect x="8" y="132.4" width="2" height="0.7" fill="#8a898b"/><rect x="8" y="135.3" width="2" height="0.7" fill="#8a898b"/><rect x="8" y="138.3" width="2" height="0.7" fill="#8a898b"/><rect x="8" y="141.2" width="2" height="0.7" fill="#8a898b"/><rect x="0" y="144.2" width="10" height="0.8" fill="#8a898b"/><rect x="8" y="147.2" width="2" height="0.7" fill="#8a898b"/><rect x="8" y="150.1" width="2" height="0.7" fill="#8a898b"/><rect x="8" y="153.1" width="2" height="0.7" fill="#8a898b"/><rect x="8" y="156.0" width="2" height="0.7" fill="#8a898b"/><rect x="6" y="159.0" width="4" height="0.7" fill="#8a898b"/><rect x="8" y="162.0" width="2" height="0.7" fill="#8a898b"/><rect x="8" y="164.9" width="2" height="0.7" fill="#8a898b"/><rect x="8" y="167.9" width="2" height="0.7" fill="#8a898b"/><rect x="8" y="170.8" width="2" height="0.7" fill="#8a898b"/><rect x="0" y="173.8" width="10" height="0.8" fill="#8a898b"/><rect x="8" y="176.8" width="2" height="0.7" fill="#8a898b"/><rect x="8" y="179.7" width="2" height="0.7" fill="#8a898b"/><rect x="8" y="182.7" width="2" height="0.7" fill="#8a898b"/><rect x="8" y="185.6" width="2" height="0.7" fill="#8a898b"/><rect x="6" y="188.6" width="4" height="0.7" fill="#8a898b"/><rect x="8" y="191.6" width="2" height="0.7" fill="#8a898b"/><rect x="8" y="194.5" width="2" height="0.7" fill="#8a898b"/><rect x="8" y="197.5" width="2" height="0.7" fill="#8a898b"/><rect x="8" y="200.4" width="2" height="0.7" fill="#8a898b"/><rect x="0" y="203.4" width="10" height="0.8" fill="#8a898b"/><rect x="8" y="206.4" width="2" height="0.7" fill="#8a898b"/><rect x="8" y="209.3" width="2" height="0.7" fill="#8a898b"/><rect x="8" y="212.3" width="2" height="0.7" fill="#8a898b"/><rect x="8" y="215.2" width="2" height="0.7" fill="#8a898b"/><rect x="6" y="218.2" width="4" height="0.7" fill="#8a898b"/><rect x="8" y="221.2" width="2" height="0.7" fill="#8a898b"/><rect x="8" y="224.1" width="2" height="0.7" fill="#8a898b"/><rect x="8" y="227.1" width="2" height="0.7" fill="#8a898b"/><rect x="8" y="230.0" width="2" height="0.7" fill="#8a898b"/><rect x="0" y="233.0" width="10" height="0.8" fill="#8a898b"/><rect x="8" y="236.0" width="2" height="0.7" fill="#8a898b"/><rect x="8" y="238.9" width="2" height="0.7" fill="#8a898b"/><rect x="8" y="241.9" width="2" height="0.7" fill="#8a898b"/><rect x="8" y="244.8" width="2" height="0.7" fill="#8a898b"/><rect x="6" y="247.8" width="4" height="0.7" fill="#8a898b"/><rect x="8" y="250.8" width="2" height="0.7" fill="#8a898b"/><rect x="8" y="253.7" width="2" height="0.7" fill="#8a898b"/><rect x="8" y="256.7" width="2" height="0.7" fill="#8a898b"/><rect x="8" y="259.6" width="2" height="0.7" fill="#8a898b"/><rect x="0" y="262.6" width="10" height="0.8" fill="#8a898b"/><rect x="8" y="265.6" width="2" height="0.7" fill="#8a898b"/><rect x="8" y="268.5" width="2" height="0.7" fill="#8a898b"/><rect x="8" y="271.5" width="2" height="0.7" fill="#8a898b"/><rect x="8" y="274.4" width="2" height="0.7" fill="#8a898b"/><rect x="6" y="277.4" width="4" height="0.7" fill="#8a898b"/><rect x="8" y="280.4" width="2" height="0.7" fill="#8a898b"/><rect x="8" y="283.3" width="2" height="0.7" fill="#8a898b"/><rect x="8" y="286.3" width="2" height="0.7" fill="#8a898b"/><rect x="8" y="289.2" width="2" height="0.7" fill="#8a898b"/><rect x="0" y="292.2" width="10" height="0.8" fill="#8a898b"/><rect x="8" y="295.2" width="2" height="0.7" fill="#8a898b"/><rect x="8" y="298.1" width="2" height="0.7" fill="#8a898b"/><rect x="8" y="301.1" width="2" height="0.7" fill="#8a898b"/><rect x="8" y="304.0" width="2" height="0.7" fill="#8a898b"/><rect x="6" y="307.0" width="4" height="0.7" fill="#8a898b"/><rect x="8" y="310.0" width="2" height="0.7" fill="#8a898b"/><rect x="8" y="312.9" width="2" height="0.7" fill="#8a898b"/><rect x="8" y="315.9" width="2" height="0.7" fill="#8a898b"/><rect x="8" y="318.8" width="2" height="0.7" fill="#8a898b"/><rect x="0" y="321.8" width="10" height="0.8" fill="#8a898b"/><rect x="8" y="324.8" width="2" height="0.7" fill="#8a898b"/><rect x="8" y="327.7" width="2" height="0.7" fill="#8a898b"/><rect x="8" y="330.7" width="2" height="0.7" fill="#8a898b"/><rect x="8" y="333.6" width="2" height="0.7" fill="#8a898b"/><rect x="6" y="336.6" width="4" height="0.7" fill="#8a898b"/><rect x="8" y="339.6" width="2" height="0.7" fill="#8a898b"/><rect x="8" y="342.5" width="2" height="0.7" fill="#8a898b"/><rect x="8" y="345.5" width="2" height="0.7" fill="#8a898b"/><rect x="8" y="348.4" width="2" height="0.7" fill="#8a898b"/><rect x="0" y="351.4" width="10" height="0.8" fill="#8a898b"/><rect x="8" y="354.4" width="2" height="0.7" fill="#8a898b"/><rect x="8" y="357.3" width="2" height="0.7" fill="#8a898b"/><rect x="8" y="360.3" width="2" height="0.7" fill="#8a898b"/><rect x="8" y="363.2" width="2" height="0.7" fill="#8a898b"/><rect x="6" y="366.2" width="4" height="0.7" fill="#8a898b"/><rect x="8" y="369.2" width="2" height="0.7" fill="#8a898b"/><rect x="8" y="372.1" width="2" height="0.7" fill="#8a898b"/><rect x="8" y="375.1" width="2" height="0.7" fill="#8a898b"/><rect x="8" y="378.0" width="2" height="0.7" fill="#8a898b"/><rect x="0" y="381.0" width="10" height="0.8" fill="#8a898b"/><rect x="8" y="384.0" width="2" height="0.7" fill="#8a898b"/><rect x="8" y="386.9" width="2" height="0.7" fill="#8a898b"/><rect x="8" y="389.9" width="2" height="0.7" fill="#8a898b"/><rect x="8" y="392.8" width="2" height="0.7" fill="#8a898b"/><rect x="6" y="395.8" width="4" height="0.7" fill="#8a898b"/><rect x="8" y="398.8" width="2" height="0.7" fill="#8a898b"/><rect x="8" y="401.7" width="2" height="0.7" fill="#8a898b"/><rect x="8" y="404.7" width="2" height="0.7" fill="#8a898b"/><rect x="8" y="407.6" width="2" height="0.7" fill="#8a898b"/><rect x="0" y="410.6" width="10" height="0.8" fill="#8a898b"/><rect x="8" y="413.6" width="2" height="0.7" fill="#8a898b"/><rect x="8" y="416.5" width="2" height="0.7" fill="#8a898b"/><rect x="8" y="419.5" width="2" height="0.7" fill="#8a898b"/><rect x="8" y="422.4" width="2" height="0.7" fill="#8a898b"/><rect x="6" y="425.4" width="4" height="0.7" fill="#8a898b"/><rect x="8" y="428.4" width="2" height="0.7" fill="#8a898b"/><rect x="8" y="431.3" width="2" height="0.7" fill="#8a898b"/><rect x="8" y="434.3" width="2" height="0.7" fill="#8a898b"/><rect x="8" y="437.2" width="2" height="0.7" fill="#8a898b"/><rect x="0" y="440.2" width="10" height="0.8" fill="#8a898b"/><rect x="8" y="443.2" width="2" height="0.7" fill="#8a898b"/><rect x="8" y="446.1" width="2" height="0.7" fill="#8a898b"/><rect x="8" y="449.1" width="2" height="0.7" fill="#8a898b"/><rect x="8" y="452.0" width="2" height="0.7" fill="#8a898b"/><rect x="6" y="455.0" width="4" height="0.7" fill="#8a898b"/><rect x="8" y="458.0" width="2" height="0.7" fill="#8a898b"/><rect x="8" y="460.9" width="2" height="0.7" fill="#8a898b"/><rect x="8" y="463.9" width="2" height="0.7" fill="#8a898b"/><rect x="8" y="466.8" width="2" height="0.7" fill="#8a898b"/><rect x="0" y="469.8" width="10" height="0.8" fill="#8a898b"/><rect x="8" y="472.8" width="2" height="0.7" fill="#8a898b"/><rect x="8" y="475.7" width="2" height="0.7" fill="#8a898b"/><rect x="8" y="478.7" width="2" height="0.7" fill="#8a898b"/><rect x="8" y="481.6" width="2" height="0.7" fill="#8a898b"/><rect x="6" y="484.6" width="4" height="0.7" fill="#8a898b"/><rect x="8" y="487.6" width="2" height="0.7" fill="#8a898b"/><rect x="8" y="490.5" width="2" height="0.7" fill="#8a898b"/><rect x="8" y="493.5" width="2" height="0.7" fill="#8a898b"/><rect x="8" y="496.4" width="2" height="0.7" fill="#8a898b"/><rect x="0" y="499.4" width="10" height="0.8" fill="#8a898b"/><rect x="8" y="502.4" width="2" height="0.7" fill="#8a898b"/><rect x="8" y="505.3" width="2" height="0.7" fill="#8a898b"/><rect x="8" y="508.3" width="2" height="0.7" fill="#8a898b"/><rect x="8" y="511.2" width="2" height="0.7" fill="#8a898b"/><rect x="6" y="514.2" width="4" height="0.7" fill="#8a898b"/><rect x="8" y="517.2" width="2" height="0.7" fill="#8a898b"/><rect x="8" y="520.1" width="2" height="0.7" fill="#8a898b"/><rect x="8" y="523.1" width="2" height="0.7" fill="#8a898b"/><rect x="8" y="526.0" width="2" height="0.7" fill="#8a898b"/><rect x="0" y="529.0" width="10" height="0.8" fill="#8a898b"/><rect x="8" y="532.0" width="2" height="0.7" fill="#8a898b"/><rect x="8" y="534.9" width="2" height="0.7" fill="#8a898b"/><rect x="8" y="537.9" width="2" height="0.7" fill="#8a898b"/><rect x="8" y="540.8" width="2" height="0.7" fill="#8a898b"/><rect x="6" y="543.8" width="4" height="0.7" fill="#8a898b"/></svg>
<div class="t" style="left:32px;top:58.4px;font-size:5.6px;line-height:5px;color:#b8b8b8;transform:rotate(90deg);transform-origin:0 0;letter-spacing:-0.1px">50</div>
<div class="t" style="left:32px;top:88.0px;font-size:5.6px;line-height:5px;color:#b8b8b8;transform:rotate(90deg);transform-origin:0 0;letter-spacing:-0.1px">0</div>
<div class="t" style="left:32px;top:117.6px;font-size:5.6px;line-height:5px;color:#b8b8b8;transform:rotate(90deg);transform-origin:0 0;letter-spacing:-0.1px">50</div>
<div class="t" style="left:32px;top:147.2px;font-size:5.6px;line-height:5px;color:#b8b8b8;transform:rotate(90deg);transform-origin:0 0;letter-spacing:-0.1px">100</div>
<div class="t" style="left:32px;top:176.8px;font-size:5.6px;line-height:5px;color:#b8b8b8;transform:rotate(90deg);transform-origin:0 0;letter-spacing:-0.1px">150</div>
<div class="t" style="left:32px;top:206.4px;font-size:5.6px;line-height:5px;color:#b8b8b8;transform:rotate(90deg);transform-origin:0 0;letter-spacing:-0.1px">200</div>
<div class="t" style="left:32px;top:236.0px;font-size:5.6px;line-height:5px;color:#b8b8b8;transform:rotate(90deg);transform-origin:0 0;letter-spacing:-0.1px">250</div>
<div class="t" style="left:32px;top:265.6px;font-size:5.6px;line-height:5px;color:#b8b8b8;transform:rotate(90deg);transform-origin:0 0;letter-spacing:-0.1px">300</div>
<div class="t" style="left:32px;top:295.2px;font-size:5.6px;line-height:5px;color:#b8b8b8;transform:rotate(90deg);transform-origin:0 0;letter-spacing:-0.1px">350</div>
<div class="t" style="left:32px;top:324.8px;font-size:5.6px;line-height:5px;color:#b8b8b8;transform:rotate(90deg);transform-origin:0 0;letter-spacing:-0.1px">400</div>
<div class="t" style="left:32px;top:354.4px;font-size:5.6px;line-height:5px;color:#b8b8b8;transform:rotate(90deg);transform-origin:0 0;letter-spacing:-0.1px">450</div>
<div class="t" style="left:32px;top:384.0px;font-size:5.6px;line-height:5px;color:#b8b8b8;transform:rotate(90deg);transform-origin:0 0;letter-spacing:-0.1px">500</div>
<div class="t" style="left:32px;top:413.6px;font-size:5.6px;line-height:5px;color:#b8b8b8;transform:rotate(90deg);transform-origin:0 0;letter-spacing:-0.1px">550</div>
<div class="t" style="left:32px;top:443.2px;font-size:5.6px;line-height:5px;color:#b8b8b8;transform:rotate(90deg);transform-origin:0 0;letter-spacing:-0.1px">600</div>
<div class="t" style="left:32px;top:472.8px;font-size:5.6px;line-height:5px;color:#b8b8b8;transform:rotate(90deg);transform-origin:0 0;letter-spacing:-0.1px">650</div>
<div class="t" style="left:32px;top:502.4px;font-size:5.6px;line-height:5px;color:#b8b8b8;transform:rotate(90deg);transform-origin:0 0;letter-spacing:-0.1px">700</div>
<div class="t" style="left:32px;top:532.0px;font-size:5.6px;line-height:5px;color:#b8b8b8;transform:rotate(90deg);transform-origin:0 0;letter-spacing:-0.1px">750</div>
<div class="a" style="left:25px;top:50px;width:10px;height:11px;background:#4b4a4c"></div>
<div class="a" style="left:3px;top:51px;width:18px;height:14px;background:#3a393b;border-radius:1px"></div>
<svg class="a" style="left:6px;top:52px" width="12" height="12" viewBox="0 0 12 12"><path d="M6,1 L6,11 M1,6 L11,6" stroke="#e2e2e2" stroke-width="1.1"/><path d="M6,0 L4,2.3 L8,2.3 Z M6,12 L4,9.7 L8,9.7 Z M0,6 L2.3,4 L2.3,8 Z M12,6 L9.7,4 L9.7,8 Z" fill="#e2e2e2"/></svg>
<svg class="a" style="left:6px;top:68px" width="12" height="12" viewBox="0 0 12 12"><rect x="1.5" y="2" width="9" height="8" stroke="#e2e2e2" stroke-width="1.1" stroke-dasharray="1.5,1.2" fill="none"/></svg>
<svg class="a" style="left:6px;top:84px" width="12" height="12" viewBox="0 0 12 12"><ellipse cx="6.5" cy="5" rx="5" ry="3.3" stroke="#e2e2e2" stroke-width="1.1" fill="none"/><path d="M3,7.5 Q2,10 4,11" stroke="#e2e2e2" stroke-width="1" fill="none"/></svg>
<svg class="a" style="left:6px;top:100px" width="12" height="12" viewBox="0 0 12 12"><path d="M1.5,10.5 L8,4" stroke="#e2e2e2" stroke-width="1.8"/><path d="M9,1 L9.5,2.5 M11,3 L9.8,3.6 M7,1.2 L7.8,2.4" stroke="#e2e2e2" stroke-width="0.9"/></svg>
<svg class="a" style="left:6px;top:116px" width="12" height="12" viewBox="0 0 12 12"><path d="M3,0.5 L3,9 L11.5,9 M0.5,3 L9,3 L9,11.5" stroke="#e2e2e2" stroke-width="1.3" fill="none"/></svg>
<svg class="a" style="left:6px;top:132px" width="12" height="12" viewBox="0 0 12 12"><rect x="1" y="1.5" width="10" height="9" stroke="#e2e2e2" stroke-width="1.1" fill="none"/><path d="M1,1.5 L11,10.5 M11,1.5 L1,10.5" stroke="#e2e2e2" stroke-width="1"/></svg>
<svg class="a" style="left:6px;top:148px" width="12" height="12" viewBox="0 0 12 12"><path d="M1.5,11 L7.5,4.5" stroke="#e2e2e2" stroke-width="1.6"/><path d="M7,3 L9.5,0.8 L11.2,2.5 L9,5 Z" fill="#e2e2e2"/></svg>
<svg class="a" style="left:6px;top:164px" width="12" height="12" viewBox="0 0 12 12"><rect x="2" y="2.5" width="8" height="7" rx="1.5" stroke="#e2e2e2" stroke-width="1.1" fill="none"/><path d="M1,4 L2,4 M1,6 L2,6 M1,8 L2,8 M10,4 L11,4 M10,6 L11,6 M10,8 L11,8 M4,1.5 L4,2.5 M6,1.5 L6,2.5 M8,1.5 L8,2.5 M4,9.5 L4,10.5 M6,9.5 L6,10.5 M8,9.5 L8,10.5" stroke="#e2e2e2" stroke-width="0.7"/></svg>
<svg class="a" style="left:6px;top:180px" width="12" height="12" viewBox="0 0 12 12"><path d="M2,11 Q2.5,8 5,7.5 L10.5,1 L11,1.5 L5.8,8.3 Q5,11 2,11 Z" fill="#e2e2e2"/></svg>
<svg class="a" style="left:6px;top:196px" width="12" height="12" viewBox="0 0 12 12"><path d="M4.5,1.5 Q6,0 7.5,1.5 L7,5 L9,5 L10.5,8 L1.5,8 L3,5 L5,5 Z" fill="#e2e2e2"/><rect x="1.5" y="9.5" width="9" height="1.2" fill="#e2e2e2"/></svg>
<svg class="a" style="left:6px;top:212px" width="12" height="12" viewBox="0 0 12 12"><path d="M2,11 Q2.5,8 5,7.5 L10.5,1 L11,1.5 L5.8,8.3 Q5,11 2,11 Z" fill="#e2e2e2"/><path d="M1,3.5 Q3,1 5.5,2.5" stroke="#e2e2e2" stroke-width="0.9" fill="none"/></svg>
<svg class="a" style="left:6px;top:228px" width="12" height="12" viewBox="0 0 12 12"><path d="M2,7 L7,2 L10.5,5.5 L5.5,10.5 L3.5,10.5 Z" stroke="#e2e2e2" stroke-width="1.1" fill="none"/><path d="M7,2 L10.5,5.5 L8.5,7.5 L5,4 Z" fill="#e2e2e2"/><path d="M5,10.5 L11,10.5" stroke="#e2e2e2" stroke-width="0.9"/></svg>
<svg class="a" style="left:6px;top:244px" width="12" height="12" viewBox="0 0 12 12"><path d="M3,5 L7,1.5 L11,6 L7,10.5 Z" stroke="#e2e2e2" stroke-width="1.1" fill="none"/><circle cx="2" cy="2.5" r="1.2" fill="#e2e2e2"/><path d="M7,5 L11,6 L9,9" fill="#e2e2e2"/></svg>
<svg class="a" style="left:6px;top:260px" width="12" height="12" viewBox="0 0 12 12"><path d="M6,0.5 Q10,5.5 10,7.5 A4,4 0 0 1 2,7.5 Q2,5.5 6,0.5 Z" fill="#e2e2e2"/></svg>
<svg class="a" style="left:6px;top:276px" width="12" height="12" viewBox="0 0 12 12"><circle cx="7" cy="4.5" r="3.6" fill="#e2e2e2"/><path d="M1.5,11 L4.8,7" stroke="#e2e2e2" stroke-width="1.5"/></svg>
<svg class="a" style="left:6px;top:292px" width="12" height="12" viewBox="0 0 12 12"><path d="M2,9 Q0.5,5 4,3 L8,1.5 Q11.5,2 11,5.5 L9,9.5 Q5,12 2,9 Z" stroke="#e2e2e2" stroke-width="1.1" fill="none"/><circle cx="5.5" cy="6.5" r="1.8" stroke="#e2e2e2" stroke-width="0.9" fill="none"/></svg>
<svg class="a" style="left:6px;top:308px" width="12" height="12" viewBox="0 0 12 12"><path d="M1.5,1.5 L10.5,1.5 M6,1.5 L6,10.5 M4,10.5 L8,10.5 M1.5,1.5 L1.5,3 M10.5,1.5 L10.5,3" stroke="#e2e2e2" stroke-width="1.5" fill="none"/></svg>
<svg class="a" style="left:6px;top:324px" width="12" height="12" viewBox="0 0 12 12"><path d="M3,0.8 L3,11 L5.5,8.5 L7.5,11.5 L9,10.5 L7,7.5 L10,7.2 Z" fill="#e2e2e2"/></svg>
<svg class="a" style="left:6px;top:340px" width="12" height="12" viewBox="0 0 12 12"><rect x="1" y="2.5" width="10" height="7.5" stroke="#e2e2e2" stroke-width="1.1" fill="#4a494b"/></svg>
<svg class="a" style="left:6px;top:356px" width="12" height="12" viewBox="0 0 12 12"><path d="M3,11 L1.5,6 Q1.5,5 2.5,5.3 L3.5,7 L3.5,2 Q3.8,1 4.6,2 L5,6 L5.2,1 Q5.8,0 6.4,1 L6.6,6 L7,1.5 Q7.6,0.7 8.2,1.6 L8.2,6.5 L9,3.5 Q9.7,2.9 10.2,3.6 L9.6,8.5 Q9,11.5 6.5,11.5 Z" fill="#e2e2e2"/></svg>
<svg class="a" style="left:6px;top:372px" width="12" height="12" viewBox="0 0 12 12"><circle cx="5" cy="5" r="3.6" stroke="#e2e2e2" stroke-width="1.2" fill="none"/><path d="M7.6,7.6 L11,11" stroke="#e2e2e2" stroke-width="1.6"/></svg>
<svg class="a" style="left:6px;top:387px" width="12" height="12" viewBox="0 0 12 12"><circle cx="2" cy="6" r="1.2" fill="#e2e2e2"/><circle cx="6" cy="6" r="1.2" fill="#e2e2e2"/><circle cx="10" cy="6" r="1.2" fill="#e2e2e2"/></svg>
<svg class="a" style="left:18.5px;top:63px" width="2" height="2"><path d="M2,0 L2,2 L0,2 Z" fill="#bdbdbd"/></svg>
<svg class="a" style="left:18.5px;top:79px" width="2" height="2"><path d="M2,0 L2,2 L0,2 Z" fill="#bdbdbd"/></svg>
<svg class="a" style="left:18.5px;top:95px" width="2" height="2"><path d="M2,0 L2,2 L0,2 Z" fill="#bdbdbd"/></svg>
<svg class="a" style="left:18.5px;top:111px" width="2" height="2"><path d="M2,0 L2,2 L0,2 Z" fill="#bdbdbd"/></svg>
<svg class="a" style="left:18.5px;top:127px" width="2" height="2"><path d="M2,0 L2,2 L0,2 Z" fill="#bdbdbd"/></svg>
<svg class="a" style="left:18.5px;top:159px" width="2" height="2"><path d="M2,0 L2,2 L0,2 Z" fill="#bdbdbd"/></svg>
<svg class="a" style="left:18.5px;top:175px" width="2" height="2"><path d="M2,0 L2,2 L0,2 Z" fill="#bdbdbd"/></svg>
<svg class="a" style="left:18.5px;top:191px" width="2" height="2"><path d="M2,0 L2,2 L0,2 Z" fill="#bdbdbd"/></svg>
<svg class="a" style="left:18.5px;top:207px" width="2" height="2"><path d="M2,0 L2,2 L0,2 Z" fill="#bdbdbd"/></svg>
<svg class="a" style="left:18.5px;top:223px" width="2" height="2"><path d="M2,0 L2,2 L0,2 Z" fill="#bdbdbd"/></svg>
<svg class="a" style="left:18.5px;top:239px" width="2" height="2"><path d="M2,0 L2,2 L0,2 Z" fill="#bdbdbd"/></svg>
<svg class="a" style="left:18.5px;top:255px" width="2" height="2"><path d="M2,0 L2,2 L0,2 Z" fill="#bdbdbd"/></svg>
<svg class="a" style="left:18.5px;top:271px" width="2" height="2"><path d="M2,0 L2,2 L0,2 Z" fill="#bdbdbd"/></svg>
<svg class="a" style="left:18.5px;top:287px" width="2" height="2"><path d="M2,0 L2,2 L0,2 Z" fill="#bdbdbd"/></svg>
<svg class="a" style="left:18.5px;top:303px" width="2" height="2"><path d="M2,0 L2,2 L0,2 Z" fill="#bdbdbd"/></svg>
<svg class="a" style="left:18.5px;top:319px" width="2" height="2"><path d="M2,0 L2,2 L0,2 Z" fill="#bdbdbd"/></svg>
<svg class="a" style="left:18.5px;top:335px" width="2" height="2"><path d="M2,0 L2,2 L0,2 Z" fill="#bdbdbd"/></svg>
<svg class="a" style="left:18.5px;top:351px" width="2" height="2"><path d="M2,0 L2,2 L0,2 Z" fill="#bdbdbd"/></svg>
<svg class="a" style="left:18.5px;top:367px" width="2" height="2"><path d="M2,0 L2,2 L0,2 Z" fill="#bdbdbd"/></svg>
<svg class="a" style="left:18.5px;top:398px" width="2" height="2"><path d="M2,0 L2,2 L0,2 Z" fill="#bdbdbd"/></svg>
<div class="a" style="left:4px;top:406px;width:4px;height:4px;background:#111;border:0.8px solid #ddd"></div>
<div class="a" style="left:6px;top:408px;width:4px;height:4px;background:#eee"></div>
<svg class="a" style="left:14px;top:405px" width="6" height="6"><path d="M1,1.5 L4,1.5 L4,5 M2.5,0.5 L1,1.5 L2.5,2.5 M3,4 L4,5.2 L5,4" stroke="#ddd" stroke-width="0.8" fill="none"/></svg>
<div class="a" style="left:9px;top:422px;width:12px;height:11.5px;background:#3e3430;border:1.2px solid #d8d8d8"></div>
<div class="a" style="left:2.5px;top:415px;width:11.5px;height:11px;background:#48443f;border:1.2px solid #d8d8d8"></div>
<div class="a" style="left:6px;top:440px;width:12px;height:9px;border:1.1px solid #dadada;border-radius:1px"></div>
<div class="a" style="left:9px;top:442px;width:6px;height:5px;border:1px solid #dadada;border-radius:50%"></div>
<div class="a" style="left:9px;top:455px;width:9px;height:7px;border:1.1px solid #dadada;background:#545254"></div>
<div class="a" style="left:6px;top:458px;width:9px;height:7px;border:1.1px solid #dadada;background:#545254"></div>
<div class="a" style="left:397px;top:545.5px;width:311px;height:8.5px;background:#5c5b5d"></div>
<svg class="a" style="left:942px;top:547px" width="4" height="5"><path d="M0.5,0.5 L3,2.5 L0.5,4.5" stroke="#777" stroke-width="0.7" fill="none"/></svg>
<svg class="a" style="left:957px;top:537px" width="6" height="4"><path d="M0.5,0.5 L3,3 L5.5,0.5" stroke="#777" stroke-width="0.7" fill="none"/></svg>
<div class="t" style="left:27.50px;top:546.35px;font-size:7.00px;color:#dcdcdc;font-weight:400;letter-spacing:-0.30px;">111.03%</div>
<div class="a" style="left:51px;top:545px;width:1px;height:9px;background:#3e3d3f"></div>
<div class="t" style="left:55.50px;top:546.41px;font-size:6.90px;color:#d4d4d4;font-weight:400;letter-spacing:-0.10px;">1020 px x 670 px (300 ppi)</div>
<div class="t" style="left:143.00px;top:546.65px;font-size:7.00px;color:#aaaaaa;font-weight:400;letter-spacing:0.00px;">&rsaquo;</div>
<div class="t" style="left:152.00px;top:546.65px;font-size:7.00px;color:#777777;font-weight:400;letter-spacing:0.00px;">&lsaquo;</div>
<svg class="a" style="left:1016px;top:36px" width="6" height="4"><path d="M3,0.5 L1.5,2 L3,3.5 M5.5,0.5 L4,2 L5.5,3.5" stroke="#cfcfcf" stroke-width="0.7" fill="none"/></svg>
<div class="t" style="left:985.00px;top:52.56px;font-size:6.80px;color:#f0f0f0;font-weight:700;letter-spacing:-0.35px;">Color</div>
<div class="t" style="left:985.00px;top:67.76px;font-size:6.80px;color:#f0f0f0;font-weight:700;letter-spacing:-0.35px;">Swatches</div>
<div class="t" style="left:985.00px;top:82.66px;font-size:6.80px;color:#f0f0f0;font-weight:700;letter-spacing:-0.35px;">Gradients</div>
<div class="t" style="left:985.00px;top:97.26px;font-size:6.80px;color:#f0f0f0;font-weight:700;letter-spacing:-0.35px;">Patterns</div>
<div class="t" style="left:985.00px;top:119.36px;font-size:6.80px;color:#f0f0f0;font-weight:700;letter-spacing:-0.35px;">Properties</div>
<div class="t" style="left:985.00px;top:134.26px;font-size:6.80px;color:#f0f0f0;font-weight:700;letter-spacing:-0.35px;">Adjustm...</div>
<div class="t" style="left:985.00px;top:149.06px;font-size:6.80px;color:#f0f0f0;font-weight:700;letter-spacing:-0.35px;">Libraries</div>
<div class="t" style="left:985.00px;top:171.06px;font-size:6.80px;color:#f0f0f0;font-weight:700;letter-spacing:-0.35px;">Character</div>
<div class="t" style="left:985.00px;top:186.06px;font-size:6.80px;color:#f0f0f0;font-weight:700;letter-spacing:-0.35px;">Paragraph</div>
<div class="t" style="left:985.00px;top:208.06px;font-size:6.80px;color:#f0f0f0;font-weight:700;letter-spacing:-0.35px;">History</div>
<div class="t" style="left:985.00px;top:223.06px;font-size:6.80px;color:#f0f0f0;font-weight:700;letter-spacing:-0.35px;">Actions</div>
<div class="t" style="left:985.00px;top:238.06px;font-size:6.80px;color:#f0f0f0;font-weight:700;letter-spacing:-0.35px;">Comme...</div>
<div class="a" style="left:965px;top:108.5px;width:59px;height:1.2px;background:#3f3e40"></div>
<div class="a" style="left:965px;top:160.0px;width:59px;height:1.2px;background:#3f3e40"></div>
<div class="a" style="left:965px;top:196.5px;width:59px;height:1.2px;background:#3f3e40"></div>
<div class="a" style="left:965px;top:248.5px;width:59px;height:1.2px;background:#3f3e40"></div>
<svg class="a" style="left:970.5px;top:49.5px" width="10" height="10" viewBox="0 0 10 10"><ellipse cx="5" cy="5.5" rx="4.6" ry="3.6" fill="#e6e6e6"/><circle cx="3" cy="5" r="0.9" fill="#545254"/><circle cx="5.5" cy="4" r="0.9" fill="#545254"/><circle cx="7.5" cy="5.5" r="0.9" fill="#545254"/><path d="M4,1 Q6,0.5 7,2" stroke="#e6e6e6" stroke-width="1" fill="none"/></svg>
<svg class="a" style="left:970.5px;top:64.7px" width="10" height="10" viewBox="0 0 10 10"><rect x="0.5" y="1" width="9" height="8" stroke="#e6e6e6" stroke-width="1" fill="none"/><path d="M0.5,3.7 L9.5,3.7 M0.5,6.3 L9.5,6.3 M3.5,1 L3.5,9 M6.5,1 L6.5,9" stroke="#e6e6e6" stroke-width="0.9"/></svg>
<svg class="a" style="left:970.5px;top:79.6px" width="10" height="10" viewBox="0 0 10 10"><defs><linearGradient id="gg"><stop offset="0" stop-color="#444"/><stop offset="1" stop-color="#eee"/></linearGradient></defs><rect x="0.5" y="1" width="9" height="8" stroke="#e6e6e6" stroke-width="1" fill="url(#gg)"/></svg>
<svg class="a" style="left:970.5px;top:94.2px" width="10" height="10" viewBox="0 0 10 10"><rect x="0.5" y="1" width="9" height="8" stroke="#e6e6e6" stroke-width="1" fill="none"/><path d="M0.5,5 L9.5,5 M5,1 L5,9 M2.5,3 L2.5,3.1 M7.5,7 L7.5,7.1" stroke="#e6e6e6" stroke-width="1.5"/></svg>
<svg class="a" style="left:970.5px;top:116.3px" width="10" height="10" viewBox="0 0 10 10"><path d="M0.5,2 L9.5,2 M0.5,5 L9.5,5 M0.5,8 L9.5,8" stroke="#e6e6e6" stroke-width="0.9"/><rect x="5.5" y="1" width="1.6" height="2" fill="#e6e6e6"/><rect x="2" y="4" width="1.6" height="2" fill="#e6e6e6"/><rect x="6" y="7" width="1.6" height="2" fill="#e6e6e6"/></svg>
<svg class="a" style="left:970.5px;top:131.2px" width="10" height="10" viewBox="0 0 10 10"><circle cx="5" cy="5" r="4.2" stroke="#e6e6e6" stroke-width="1" fill="none"/><path d="M8,2 L2,8 A4.2,4.2 0 0 1 8,2 Z" fill="#e6e6e6"/></svg>
<svg class="a" style="left:970.5px;top:146.0px" width="10" height="10" viewBox="0 0 10 10"><rect x="0.5" y="0.5" width="9" height="9" rx="1" stroke="#e6e6e6" stroke-width="1" fill="none"/><rect x="2.5" y="2" width="2" height="6" fill="#e6e6e6"/></svg>
<svg class="a" style="left:970.5px;top:168.0px" width="10" height="10" viewBox="0 0 10 10"><path d="M0.5,9 L3.5,1 L6.5,9 M1.7,6 L5.3,6 M8.5,0.5 L8.5,9.5" stroke="#e6e6e6" stroke-width="1" fill="none"/></svg>
<svg class="a" style="left:970.5px;top:183.0px" width="10" height="10" viewBox="0 0 10 10"><path d="M4,1 L8,1 M5.5,1 L5.5,9.5 M7.2,1 L7.2,9.5" stroke="#e6e6e6" stroke-width="1" fill="none"/><circle cx="4" cy="3.5" r="2.5" fill="#e6e6e6"/></svg>
<svg class="a" style="left:970.5px;top:205.0px" width="10" height="10" viewBox="0 0 10 10"><rect x="1" y="1" width="3.5" height="3" stroke="#e6e6e6" stroke-width="0.9" fill="none"/><rect x="1" y="5.5" width="3.5" height="3.5" fill="#e6e6e6"/><path d="M6.5,2 Q9.5,4 7.5,8.5 M6.5,7.5 L7.5,8.8 L8.8,7.8" stroke="#e6e6e6" stroke-width="0.9" fill="none"/></svg>
<svg class="a" style="left:970.5px;top:220.0px" width="10" height="10" viewBox="0 0 10 10"><path d="M1,0.8 L9.5,5 L1,9.2 Z" fill="#e6e6e6"/></svg>
<svg class="a" style="left:970.5px;top:235.0px" width="10" height="10" viewBox="0 0 10 10"><path d="M0.5,1 L9.5,1 L9.5,7 L4,7 L1.8,9.2 L1.8,7 L0.5,7 Z" fill="#e6e6e6"/></svg>
<div id="photo" class="a"><svg style="position:absolute;left:0;top:0" width="487" height="325" viewBox="249 121 487 325">
<defs>
<linearGradient id="wall" x1="0" y1="0" x2="1" y2="0">
 <stop offset="0" stop-color="#5ba4d5"/><stop offset="0.3" stop-color="#6fbae6"/><stop offset="0.5" stop-color="#88cdef"/><stop offset="0.75" stop-color="#a8def5"/><stop offset="1" stop-color="#c4ecf9"/>
</linearGradient>
<radialGradient id="glow" cx="736" cy="150" r="200" gradientUnits="userSpaceOnUse" gradientTransform="translate(736,150) scale(1,1) translate(-736,-150)">
 <stop offset="0" stop-color="#eefafe" stop-opacity="0.95"/><stop offset="0.45" stop-color="#d4f0fa" stop-opacity="0.55"/><stop offset="1" stop-color="#b0e2f6" stop-opacity="0"/>
</radialGradient>
<linearGradient id="wallv" x1="0" y1="0" x2="0" y2="1">
 <stop offset="0" stop-color="#3a80c0" stop-opacity="0.08"/><stop offset="0.5" stop-color="#4a90c8" stop-opacity="0"/><stop offset="1" stop-color="#ffffff" stop-opacity="0.04"/>
</linearGradient>
<linearGradient id="floor" x1="0" y1="0" x2="0" y2="1">
 <stop offset="0" stop-color="#eef1f4"/><stop offset="0.25" stop-color="#f5f5f7"/><stop offset="1" stop-color="#f4f2f5"/>
</linearGradient>
<linearGradient id="pink" x1="0" y1="0" x2="1" y2="1">
 <stop offset="0" stop-color="#e8cbbd"/><stop offset="0.6" stop-color="#dfbcac"/><stop offset="1" stop-color="#d4ac9a"/>
</linearGradient>
<linearGradient id="wshoe" x1="0" y1="0" x2="1" y2="1">
 <stop offset="0" stop-color="#f4f3ee"/><stop offset="1" stop-color="#e6e4dc"/>
</linearGradient>
<linearGradient id="lshoe" x1="0" y1="0" x2="1" y2="1">
 <stop offset="0" stop-color="#f4f3f2"/><stop offset="1" stop-color="#e4e2e0"/>
</linearGradient>
<radialGradient id="shad" cx="0.5" cy="0.5" r="0.5">
 <stop offset="0" stop-color="#b4c0c8" stop-opacity="0.6"/><stop offset="1" stop-color="#d8e0e6" stop-opacity="0"/>
</radialGradient>
<linearGradient id="acr" x1="0" y1="0.2" x2="1" y2="0.6">
 <stop offset="0" stop-color="#eef4f6" stop-opacity="0.7"/><stop offset="0.5" stop-color="#dcecf0" stop-opacity="0.85"/><stop offset="1" stop-color="#c8e2ea" stop-opacity="0.95"/>
</linearGradient>
</defs>
<rect x="249" y="121" width="487" height="180" fill="url(#wall)"/>
<rect x="249" y="121" width="487" height="180" fill="url(#glow)"/>
<rect x="249" y="121" width="487" height="180" fill="url(#wallv)"/>
<rect x="249" y="300" width="487" height="146" fill="url(#floor)"/>
<!-- right acrylic stand -->
<path d="M501,238 L655,230 L655,301 L503,301 Z" fill="#c8ecf8" opacity="0.3"/>
<path d="M515,250 L515,301 M652,236 L652,301" stroke="#e0f4fa" stroke-width="0.8" opacity="0.4"/>
<!-- left acrylic stand -->
<path d="M317,283 L351,316 L468,300 L468,285 Z" fill="#dff0f4" opacity="0.45"/>
<path d="M351,316 L468,300 L468,362 L351,374 Z" fill="url(#acr)"/>
<path d="M351,316 L351,374 L468,362" stroke="#d6e8ee" stroke-width="1" fill="none"/>
<path d="M468,300 L468,362" stroke="#c8e0e8" stroke-width="1" fill="none"/>
<path d="M317,283 L351,316 L468,300" stroke="#e4f2f6" stroke-width="0.8" fill="none" opacity="0.8"/>
<!-- floor shadows -->
<ellipse cx="632" cy="392" rx="42" ry="12" fill="url(#shad)" opacity="0.8"/>
<ellipse cx="585" cy="395" rx="70" ry="16" fill="url(#shad)" opacity="0.5"/>
<ellipse cx="430" cy="392" rx="30" ry="8" fill="url(#shad)" opacity="0.5"/>
<!-- ===== pink back shoe ===== -->
<path d="M436,281 L486,272 C489,273 490,277 489,281 C480,286 460,291 444,294 Z" fill="#f6f4f2"/>
<path d="M442,290 L488,279" stroke="#e0dcd8" stroke-width="2" stroke-dasharray="0.8,1.2" fill="none"/>
<path d="M368,248 L367,228 C368,223 374,221 380,223 C386,228 392,233 396,237 L406,231 C413,229 419,230 424,234 C440,245 460,256 474,265 C482,270 487,272 486,276 L440,284 L393,252 Z" fill="url(#pink)"/>
<path d="M368,227 C371,222 376,221 380,223 L396,237 L388,245 L370,240 Z" fill="#efe8da"/>
<path d="M410,240 L430,250 M414,248 L440,258 M422,256 L446,264 M432,244 L450,258" stroke="#b48c7a" stroke-width="0.9" fill="none"/>
<circle cx="426" cy="262" r="1.3" fill="#a88060"/><circle cx="438" cy="268" r="1.3" fill="#a88060"/>
<path d="M444,270 Q446,278 444,283" stroke="#9a7060" stroke-width="0.8" fill="none"/>
<!-- ===== pink front shoe ===== -->
<path d="M318,281 C318,276 320,273 323,273 L412,296 C425,296 435,291 441,287 C445,289 446,295 444,300 C440,305 425,309 413,311 L322,288 C319,287 318,284 318,281 Z" fill="#f7f5f3"/>
<path d="M321,284 L413,307 C425,305 436,301 443,297" stroke="#e0dcd8" stroke-width="2.2" stroke-dasharray="0.8,1.2" fill="none"/>
<path d="M323,276 C322,262 324,244 330,234 C336,230 346,230 352,236 C358,243 362,250 366,253 L376,247 C392,250 415,262 430,274 C438,280 442,286 440,290 C430,296 420,298 412,298 Z" fill="url(#pink)"/>
<path d="M331,236 C336,231 345,231 351,236 C357,243 361,249 365,253 L352,257 C344,256 336,250 331,236 Z" fill="#efe8da"/>
<path d="M376,247 C392,250 415,262 430,274 C438,280 442,286 440,290" stroke="#c9a290" stroke-width="0.9" fill="none"/>
<path d="M366,262 L392,252 M372,270 L400,257 M380,277 L408,263 M378,250 L398,272 M388,252 L410,270" stroke="#b48c7a" stroke-width="0.9" fill="none"/>
<circle cx="380" cy="272" r="1.4" fill="#a07a62"/><circle cx="387" cy="280" r="1.4" fill="#a07a62"/><circle cx="404" cy="262" r="1.3" fill="#a07a62"/>
<path d="M346,275 L356,270 L366,268" stroke="#9a7462" stroke-width="1" fill="none"/>
<path d="M396,280 Q398,290 394,298" stroke="#9a7060" stroke-width="0.8" fill="none"/>
<!-- ===== upper white back shoe ===== -->
<path d="M482,223 Q484,212 494,209 L511,199 Q525,193 538,190 L556,179 L572,177 Q588,183 598,191 Q610,184 619,182 Q625,183 626,190 L627,202 L575,222 L530,236 L502,236 Q486,233 482,223 Z" fill="#f0efe8"/>
<path d="M484,228 Q494,234 502,236 L530,236 L520,240 L500,238 Q487,235 484,228 Z" fill="#e6e3d6"/>
<path d="M600,193 Q610,186 619,184 L621,188 Q611,190 604,196 Z" fill="#b4b29c"/>
<path d="M486,229 Q481,221 488,213" stroke="#d8d6cc" stroke-width="0.8" fill="none"/>
<path d="M517.2,197.2 L522.8,202.4 M527.2,192.8 L532.8,198.0 M537.2,188.4 L542.8,193.6 M547.2,184.0 L552.8,189.2 M557.2,179.6 L562.8,184.8" stroke="#ffffff" stroke-width="1.8" fill="none"/>
<circle cx="518.6" cy="196.6" r="0.8" fill="#6a6c6e"/><circle cx="521.4" cy="203.0" r="0.8" fill="#6a6c6e"/><circle cx="528.6" cy="192.2" r="0.8" fill="#6a6c6e"/><circle cx="531.4" cy="198.6" r="0.8" fill="#6a6c6e"/><circle cx="538.6" cy="187.8" r="0.8" fill="#6a6c6e"/><circle cx="541.4" cy="194.2" r="0.8" fill="#6a6c6e"/><circle cx="548.6" cy="183.4" r="0.8" fill="#6a6c6e"/><circle cx="551.4" cy="189.8" r="0.8" fill="#6a6c6e"/><circle cx="558.6" cy="179.0" r="0.8" fill="#6a6c6e"/><circle cx="561.4" cy="185.4" r="0.8" fill="#6a6c6e"/>
<!-- ===== upper white front shoe ===== -->
<path d="M502,232 Q503,222 511,219 L529,211 L547,201 L565,192 Q585,187 599,192 L601,200 Q610,205 617,206 Q630,198 642,190 Q647,192 648,200 Q650,208 650,217 L650,237 L575,248 L530,246 L504,239 Z" fill="url(#wshoe)"/>
<path d="M503,234 Q540,236 575,236 L650,224 L650,237 L575,248 L530,246 L504,239 Z" fill="#e9e5d4"/>
<path d="M599,193 Q620,189 642,190 Q630,199 617,206 Q607,204 601,200 Z" fill="#a9a78f"/>
<path d="M504,238 Q502,224 511,219 L529,211" stroke="#d4d2c8" stroke-width="1" fill="none"/>
<path d="M540.6,202.8 L546.2,209.2 M551.4,198.8 L557.0,205.2 M562.2,194.8 L567.8,201.2 M573.0,190.8 L578.6,197.2 M583.8,186.8 L589.4,193.2" stroke="#ffffff" stroke-width="2" fill="none"/>
<circle cx="542.0" cy="202.2" r="0.8" fill="#6a6c6e"/><circle cx="544.8" cy="209.8" r="0.8" fill="#6a6c6e"/><circle cx="552.8" cy="198.2" r="0.8" fill="#6a6c6e"/><circle cx="555.6" cy="205.8" r="0.8" fill="#6a6c6e"/><circle cx="563.6" cy="194.2" r="0.8" fill="#6a6c6e"/><circle cx="566.4" cy="201.8" r="0.8" fill="#6a6c6e"/><circle cx="574.4" cy="190.2" r="0.8" fill="#6a6c6e"/><circle cx="577.2" cy="197.8" r="0.8" fill="#6a6c6e"/><circle cx="585.2" cy="186.2" r="0.8" fill="#6a6c6e"/><circle cx="588.0" cy="193.8" r="0.8" fill="#6a6c6e"/>
<path d="M590,188 Q596,178 600,174 M594,190 Q605,182 608,176" stroke="#ffffff" stroke-width="1.5" fill="none"/>
<!-- ===== lower white back shoe ===== -->
<path d="M416,383 Q416,366 427,362 L444,351 L466,340 L498,317 L526,327 Q550,322 572,320 L580,343 L565,362 L470,386 L438,395 Q420,394 416,383 Z" fill="url(#lshoe)"/>
<path d="M416,384 Q430,386 445,385 L470,380 L438,395 Q420,394 416,384 Z" fill="#e8e5da"/>
<path d="M528,327 Q550,322 572,320 L574,334 Q552,330 534,333 Z" fill="#dcbca6"/>
<path d="M573,319 L576,319 L580,342 L577,340 Z" fill="#7a4a2e"/>
<!-- ===== lower white front shoe ===== -->
<path d="M440,412 Q440,394 448,388 L470,379 L492,366 L515,349 L537,345 Q570,342 600,341 Q607,341 608,346 L611,376 L611,396 Q590,404 505,416 L470,427 L448,422 Q440,420 440,412 Z" fill="url(#lshoe)"/>
<path d="M441,414 Q460,414 505,405 L611,379 L611,397 Q590,404 505,416 L470,427 L448,422 Q441,420 441,414 Z" fill="#ebe8de"/>
<path d="M540,346 Q570,342 603,341 L604,362 Q580,354 556,356 Z" fill="#dfc2ae"/>
<path d="M604,341 Q608,341 608.5,346 L611.5,378 L609,378 L605.5,346 Z" fill="#7a4a2e"/>
<path d="M560,367 Q585,358 605,356" stroke="#d0cec8" stroke-width="0.8" fill="none" opacity="0.7"/>
<path d="M466,384 L476,382 L528,342 L522,338 Z" fill="#9ea2a6" opacity="0.8"/>
<path d="M473.2,376.9 L483.5,380.4 M478.0,373.3 L478.7,384.1 M481.9,370.3 L492.1,373.7 M486.6,366.6 L487.4,377.4 M490.5,363.6 L500.8,367.1 M495.3,359.9 L496.0,370.7 M499.2,356.9 L509.5,360.4 M504.0,353.3 L504.7,364.1 M507.9,350.3 L518.1,353.7 M512.6,346.6 L513.4,357.4 M516.5,343.6 L526.8,347.1 M521.3,339.9 L522.0,350.7" stroke="#fafafa" stroke-width="2" fill="none"/>
<path d="M473.2,376.9 L483.5,380.4 M478.0,373.3 L478.7,384.1 M481.9,370.3 L492.1,373.7 M486.6,366.6 L487.4,377.4 M490.5,363.6 L500.8,367.1 M495.3,359.9 L496.0,370.7 M499.2,356.9 L509.5,360.4 M504.0,353.3 L504.7,364.1 M507.9,350.3 L518.1,353.7 M512.6,346.6 L513.4,357.4 M516.5,343.6 L526.8,347.1 M521.3,339.9 L522.0,350.7" stroke="#a0a4aa" stroke-width="0.7" stroke-dasharray="1,1.6" fill="none"/>
<path d="M522,338 Q530,350 527,370 Q525,382 523,390 M530,340 Q538,356 533,372 Q531,380 529,386" stroke="#b4b8bc" stroke-width="3" fill="none"/>
<path d="M522,338 Q530,350 527,370 Q525,382 523,390 M530,340 Q538,356 533,372 Q531,380 529,386" stroke="#fbfbfb" stroke-width="2" fill="none"/>
<path d="M522,338 Q530,350 527,370 Q525,382 523,390 M530,340 Q538,356 533,372 Q531,380 529,386" stroke="#a0a4aa" stroke-width="0.6" stroke-dasharray="1,3" fill="none"/>
<path d="M482,408 Q476,392 480,378" stroke="#d6d6d6" stroke-width="0.9" fill="none"/>

<path d="M462,352 L466,356 L510,318 L506,314 Z" fill="#b0b4b8" opacity="0.5"/>
<path d="M463.9,348.8 L472.9,351.6 M467.7,345.5 L469.1,354.9 M472.7,341.2 L481.7,344.0 M476.5,337.9 L477.9,347.3 M481.5,333.6 L490.5,336.4 M485.3,330.3 L486.7,339.7 M490.3,326.0 L499.3,328.8 M494.1,322.7 L495.5,332.1 M499.1,318.4 L508.1,321.2 M502.9,315.1 L504.3,324.5" stroke="#f8f8f8" stroke-width="1.8" fill="none"/>
<path d="M463.9,348.8 L472.9,351.6 M467.7,345.5 L469.1,354.9 M472.7,341.2 L481.7,344.0 M476.5,337.9 L477.9,347.3 M481.5,333.6 L490.5,336.4 M485.3,330.3 L486.7,339.7 M490.3,326.0 L499.3,328.8 M494.1,322.7 L495.5,332.1 M499.1,318.4 L508.1,321.2 M502.9,315.1 L504.3,324.5" stroke="#a0a4aa" stroke-width="0.6" stroke-dasharray="1,1.6" fill="none"/>
<path d="M441,413 Q440,394 448,388 L470,379" stroke="#d2d2d4" stroke-width="0.9" fill="none"/>
<path d="M417,385 Q416,366 427,362 L444,351" stroke="#d6d6d8" stroke-width="0.9" fill="none"/>
<path d="M452,400 Q500,392 520,384 L560,366" stroke="#dcdcdc" stroke-width="0.8" fill="none"/>
</svg></div>
<div class="a" style="left:812px;top:153px;width:136px;height:231px;background:#4c4a4d"></div>
<div class="a" style="left:812px;top:153px;width:136px;height:7.5px;background:#424143"></div>
<svg class="a" style="left:931px;top:154.5px" width="6" height="4"><path d="M3,0.5 L1.5,2 L3,3.5 M5.5,0.5 L4,2 L5.5,3.5" stroke="#d8d8d8" stroke-width="0.8" fill="none"/></svg>
<svg class="a" style="left:941.5px;top:154.5px" width="5" height="5"><path d="M0.5,0.5 L4.5,4.5 M4.5,0.5 L0.5,4.5" stroke="#e0e0e0" stroke-width="1"/></svg>
<div class="a" style="left:812px;top:160.5px;width:136px;height:14px;background:#424143"></div>
<div class="a" style="left:813px;top:160.5px;width:27px;height:14px;background:#4c4a4d"></div>
<div class="t" style="left:816.50px;top:164.91px;font-size:6.70px;color:#f4f4f4;font-weight:700;letter-spacing:-0.35px;">Layers</div>
<div class="t" style="left:845.00px;top:164.91px;font-size:6.70px;color:#b4b4b4;font-weight:400;letter-spacing:-0.20px;">Channels</div>
<div class="t" style="left:882.00px;top:164.91px;font-size:6.70px;color:#b4b4b4;font-weight:400;letter-spacing:-0.20px;">Paths</div>
<div class="a" style="left:940px;top:165px;width:6px;height:5px;border-top:1px solid #9a9a9a;border-bottom:1px solid #9a9a9a"></div>
<div class="a" style="left:940px;top:167px;width:6px;height:1px;background:#9a9a9a"></div>
<div class="a" style="left:815px;top:180.5px;width:52px;height:10.5px;background:#424143;border:0.8px solid #3a393b"></div>
<svg class="a" style="left:818px;top:182.5px" width="6" height="6"><circle cx="2.5" cy="2.5" r="1.8" stroke="#e0e0e0" stroke-width="0.9" fill="none"/><path d="M3.8,3.8 L5.6,5.6" stroke="#e0e0e0" stroke-width="1"/></svg>
<div class="t" style="left:826.00px;top:182.91px;font-size:6.70px;color:#e4e4e4;font-weight:400;letter-spacing:-0.20px;">Kind</div>
<svg class="a" style="left:861px;top:184.5px" width="5" height="3"><path d="M0.5,0.5 L2.5,2.5 L4.5,0.5" stroke="#b0b0b0" stroke-width="0.7" fill="none"/></svg>
<svg class="a" style="left:874px;top:181px" width="9" height="9" viewBox="0 0 9 9"><rect x="0.5" y="1" width="8" height="7" stroke="#dedede" stroke-width="0.9" fill="none"/><path d="M1,7.5 L3.5,4 L5,5.5 L6.5,3.5 L8,7.5 Z" fill="#dedede"/></svg>
<svg class="a" style="left:889px;top:181px" width="9" height="9" viewBox="0 0 9 9"><circle cx="4.5" cy="4.5" r="3.8" fill="#dedede"/><path d="M7,2 L2,7 A3.5,3.5 0 0 0 7,2 Z" fill="#4c4a4d"/></svg>
<svg class="a" style="left:901px;top:181px" width="9" height="9" viewBox="0 0 9 9"><path d="M1,1 L8,1 L8,2.8 M4.5,1 L4.5,8.5 M3,8.5 L6,8.5 M1,1 L1,2.8" stroke="#dedede" stroke-width="1.3" fill="none"/></svg>
<svg class="a" style="left:913px;top:181px" width="9" height="9" viewBox="0 0 9 9"><rect x="1.5" y="1.5" width="6" height="6" stroke="#dedede" stroke-width="0.9" fill="none"/><rect x="0" y="0" width="2.5" height="2.5" fill="#dedede"/><rect x="6.5" y="0" width="2.5" height="2.5" fill="#dedede"/><rect x="0" y="6.5" width="2.5" height="2.5" fill="#dedede"/><rect x="6.5" y="6.5" width="2.5" height="2.5" fill="#dedede"/></svg>
<svg class="a" style="left:926px;top:181px" width="9" height="9" viewBox="0 0 9 9"><path d="M1,3 L4,0.8 L8,0.8 L8,8.5 L1,8.5 Z" stroke="#dedede" stroke-width="0.9" fill="none"/><rect x="3" y="4" width="3.5" height="3.5" fill="#dedede"/></svg>
<div class="a" style="left:942.5px;top:180.5px;width:4.5px;height:10px;background:#3a393b;border-radius:2px"></div>
<div class="a" style="left:942.5px;top:180.5px;width:4.5px;height:4.5px;background:#f0f0f0;border-radius:50%"></div>
<div class="a" style="left:815px;top:196px;width:67px;height:11px;background:#424143;border:0.8px solid #3a393b"></div>
<div class="t" style="left:818.00px;top:198.72px;font-size:6.70px;color:#e4e4e4;font-weight:400;letter-spacing:-0.20px;">Normal</div>
<svg class="a" style="left:876px;top:200.5px" width="5" height="3"><path d="M0.5,0.5 L2.5,2.5 L4.5,0.5" stroke="#b0b0b0" stroke-width="0.7" fill="none"/></svg>
<div class="t" style="left:885.50px;top:198.51px;font-size:6.70px;color:#bdbdbd;font-weight:400;letter-spacing:-0.20px;">Opacity:</div>
<div class="a" style="left:913px;top:196px;width:24px;height:11px;background:#424143;border:0.8px solid #3a393b"></div>
<div class="t" style="left:915.50px;top:198.72px;font-size:6.70px;color:#e4e4e4;font-weight:400;letter-spacing:-0.20px;">62%</div>
<div class="a" style="left:937.5px;top:196px;width:8px;height:11px;background:#424143;border:0.8px solid #3a393b"></div>
<svg class="a" style="left:939.5px;top:200.5px" width="5" height="3"><path d="M0.5,0.5 L2.5,2.5 L4.5,0.5" stroke="#b0b0b0" stroke-width="0.7" fill="none"/></svg>
<div class="t" style="left:815.00px;top:214.51px;font-size:6.70px;color:#bdbdbd;font-weight:400;letter-spacing:-0.20px;">Lock:</div>
<svg class="a" style="left:834.5px;top:213px" width="8" height="8" viewBox="0 0 8 8"><rect x="0.5" y="0.5" width="7" height="7" stroke="#a8a8a8" stroke-width="0.8" fill="none"/><rect x="1" y="1" width="3" height="3" fill="#a8a8a8"/><rect x="4" y="4" width="3" height="3" fill="#a8a8a8"/></svg>
<svg class="a" style="left:846.0px;top:213px" width="8" height="8" viewBox="0 0 8 8"><path d="M1,8 L6.5,1.5" stroke="#a8a8a8" stroke-width="1.4"/></svg>
<svg class="a" style="left:857.5px;top:213px" width="8" height="8" viewBox="0 0 8 8"><path d="M4,0 L4,8 M0,4 L8,4" stroke="#dedede" stroke-width="0.9"/><path d="M4,0 L2.8,1.5 L5.2,1.5 Z M4,8 L2.8,6.5 L5.2,6.5 Z M0,4 L1.5,2.8 L1.5,5.2 Z M8,4 L6.5,2.8 L6.5,5.2 Z" fill="#dedede"/></svg>
<svg class="a" style="left:869.5px;top:213px" width="8" height="8" viewBox="0 0 8 8"><path d="M2,0 L2,6 L8,6 M0,2 L6,2 L6,8" stroke="#dedede" stroke-width="0.9" fill="none"/></svg>
<svg class="a" style="left:881.5px;top:213px" width="8" height="8" viewBox="0 0 8 8"><rect x="1" y="3.5" width="6" height="4.5" fill="#dedede"/><path d="M2.3,3.5 L2.3,2 A1.7,1.7 0 0 1 5.7,2 L5.7,3.5" stroke="#dedede" stroke-width="0.9" fill="none"/></svg>
<div class="t" style="left:899.00px;top:214.51px;font-size:6.70px;color:#bdbdbd;font-weight:400;letter-spacing:-0.20px;">Fill:</div>
<div class="a" style="left:913px;top:211.5px;width:24px;height:11px;background:#424143;border:0.8px solid #3a393b"></div>
<div class="t" style="left:915.50px;top:214.51px;font-size:6.70px;color:#e4e4e4;font-weight:400;letter-spacing:-0.20px;">100%</div>
<div class="a" style="left:937.5px;top:211.5px;width:8px;height:11px;background:#424143;border:0.8px solid #3a393b"></div>
<svg class="a" style="left:939.5px;top:216px" width="5" height="3"><path d="M0.5,0.5 L2.5,2.5 L4.5,0.5" stroke="#b0b0b0" stroke-width="0.7" fill="none"/></svg>
<div class="a" style="left:812px;top:225.5px;width:136px;height:1px;background:#434244"></div>
<div class="a" style="left:815px;top:227px;width:124px;height:15px;background:#4f4d50"></div>
<svg class="a" style="left:816.5px;top:231.8px" width="8" height="6" viewBox="0 0 8 6"><path d="M0.4,3 Q4,-0.6 7.6,3 Q4,6.6 0.4,3 Z" fill="#e4e4e4"/><circle cx="4" cy="3" r="1.3" fill="#4d4b4e"/><circle cx="4" cy="3" r="0.6" fill="#e4e4e4"/></svg>
<svg class="a" style="left:831px;top:228.8px" width="16" height="10.5" viewBox="0 0 16 10.5"><rect width="16" height="10.5" fill="#f2f0f4"/><rect width="16" height="6" fill="#8fd0ec"/><rect x="0" y="0" width="6" height="6" fill="#6cb4de"/><ellipse cx="4.5" cy="6" rx="3" ry="1.6" fill="#e2c6b8"/><ellipse cx="10.5" cy="3.6" rx="3" ry="1.3" fill="#f0efe8"/><ellipse cx="8.5" cy="7.8" rx="3.4" ry="1.6" fill="#e8e8e6"/></svg>
<div class="t" style="left:853.00px;top:231.81px;font-size:6.70px;color:#e6e6e6;font-weight:400;letter-spacing:-0.20px;">Layer 1</div>
<div class="a" style="left:815px;top:242px;width:124px;height:32.5px;background:#565557"></div>
<div class="a" style="left:828.5px;top:242.5px;width:110.5px;height:15.5px;background:#646363"></div>
<div class="a" style="left:828.5px;top:258.8px;width:110.5px;height:15.5px;background:#646363"></div>
<svg class="a" style="left:816.5px;top:248.4px" width="8" height="6" viewBox="0 0 8 6"><path d="M0.4,3 Q4,-0.6 7.6,3 Q4,6.6 0.4,3 Z" fill="#e4e4e4"/><circle cx="4" cy="3" r="1.3" fill="#4d4b4e"/><circle cx="4" cy="3" r="0.6" fill="#e4e4e4"/></svg>
<div class="a" style="left:831px;top:245.6px;width:16px;height:11.5px;background:#fafafa"></div>
<div class="a" style="left:831px;top:245.6px;width:8px;height:11.5px;background-image:linear-gradient(45deg,#d8d8d8 25%,transparent 25%,transparent 75%,#d8d8d8 75%),linear-gradient(45deg,#d8d8d8 25%,transparent 25%,transparent 75%,#d8d8d8 75%);background-size:4px 4px;background-position:0 0,2px 2px"></div>
<div class="a" style="left:838.5px;top:245.6px;width:1.2px;height:11.5px;background:#202020"></div>
<div class="a" style="left:839px;top:245.6px;width:8px;height:1.2px;background:#202020"></div>
<div class="a" style="left:840.8px;top:249.6px;width:5px;height:5.5px;border:0.9px solid #202020"></div>
<div class="t" style="left:853.00px;top:248.72px;font-size:6.70px;color:#ececec;font-weight:400;letter-spacing:-0.20px;">Rectangle 1 copy</div>
<svg class="a" style="left:816.5px;top:264.2px" width="8" height="6" viewBox="0 0 8 6"><path d="M0.4,3 Q4,-0.6 7.6,3 Q4,6.6 0.4,3 Z" fill="#e4e4e4"/><circle cx="4" cy="3" r="1.3" fill="#4d4b4e"/><circle cx="4" cy="3" r="0.6" fill="#e4e4e4"/></svg>
<div class="a" style="left:831px;top:261.4px;width:16px;height:11.5px;background:#fafafa"></div>
<div class="a" style="left:831px;top:261.4px;width:8px;height:11.5px;background-image:linear-gradient(45deg,#d8d8d8 25%,transparent 25%,transparent 75%,#d8d8d8 75%),linear-gradient(45deg,#d8d8d8 25%,transparent 25%,transparent 75%,#d8d8d8 75%);background-size:4px 4px;background-position:0 0,2px 2px"></div>
<div class="a" style="left:833.5px;top:263.2px;width:3px;height:8px;background:#303030"></div>
<div class="a" style="left:838.5px;top:261.4px;width:1.2px;height:11.5px;background:#202020"></div>
<div class="a" style="left:839px;top:261.4px;width:8px;height:1.2px;background:#202020"></div>
<div class="a" style="left:840.8px;top:265.4px;width:5px;height:5.5px;border:0.9px solid #202020"></div>
<div class="t" style="left:853.00px;top:264.51px;font-size:6.70px;color:#ececec;font-weight:400;letter-spacing:-0.20px;">Rectangle 1</div>
<div class="a" style="left:815px;top:275.5px;width:124px;height:16.5px;background:#4f4d50"></div>
<svg class="a" style="left:816.5px;top:282.0px" width="8" height="6" viewBox="0 0 8 6"><path d="M0.4,3 Q4,-0.6 7.6,3 Q4,6.6 0.4,3 Z" fill="#e4e4e4"/><circle cx="4" cy="3" r="1.3" fill="#4d4b4e"/><circle cx="4" cy="3" r="0.6" fill="#e4e4e4"/></svg>
<div class="a" style="left:831px;top:278.5px;width:16px;height:12.5px;background:#283c68"></div>
<div class="t" style="left:853.00px;top:282.12px;font-size:6.70px;color:#e6e6e6;font-weight:400;letter-spacing:-0.20px;font-style:italic">Background</div>
<svg class="a" style="left:925px;top:280.5px" width="6" height="8" viewBox="0 0 6 8"><rect x="0.5" y="3.5" width="5" height="4" stroke="#d0d0d0" stroke-width="0.8" fill="none"/><path d="M1.5,3.5 L1.5,2.2 A1.5,1.5 0 0 1 4.5,2.2 L4.5,3.5" stroke="#d0d0d0" stroke-width="0.8" fill="none"/></svg>
<div class="a" style="left:810px;top:238.5px;width:134.5px;height:39px;border:2.8px solid #c01f29"></div>
<div class="a" style="left:812px;top:364.5px;width:136px;height:15px;background:#535254;border-top:0.8px solid #454446"></div>
<div class="a" style="left:812px;top:379.5px;width:136px;height:4.5px;background:#5c5b5d"></div>
<svg class="a" style="left:822.5px;top:367px" width="10" height="10" viewBox="0 0 10 10"><path d="M3.5,3 L2,3 A2,2 0 0 0 2,7 L3.5,7 M6.5,3 L8,3 A2,2 0 0 1 8,7 L6.5,7 M3,5 L7,5" stroke="#d8d8d8" stroke-width="1" fill="none"/></svg>
<svg class="a" style="left:839.5px;top:367px" width="10" height="10" viewBox="0 0 10 10"><text x="1" y="8" font-family="Liberation Serif" font-style="italic" font-size="8" fill="#a8a8a8">fx</text></svg>
<svg class="a" style="left:855.5px;top:367px" width="10" height="10" viewBox="0 0 10 10"><rect x="1" y="2" width="8" height="6.5" fill="#cfcfcf"/><rect x="2.5" y="3.5" width="5" height="3.5" fill="#535254"/></svg>
<svg class="a" style="left:872.5px;top:367px" width="10" height="10" viewBox="0 0 10 10"><circle cx="5" cy="5" r="3.8" fill="#e0e0e0"/><path d="M7.7,2.3 L2.3,7.7 A3.8,3.8 0 0 0 7.7,2.3 Z" fill="#535254"/></svg>
<svg class="a" style="left:889.5px;top:367px" width="10" height="10" viewBox="0 0 10 10"><path d="M0.5,2 L4,2 L5,3 L9.5,3 L9.5,8.5 L0.5,8.5 Z" fill="#e6e6e6"/></svg>
<svg class="a" style="left:906.0px;top:367px" width="10" height="10" viewBox="0 0 10 10"><rect x="1" y="1" width="8" height="8" stroke="#dcdcdc" stroke-width="0.9" fill="none"/><path d="M5,3 L5,7 M3,5 L7,5" stroke="#dcdcdc" stroke-width="1"/></svg>
<svg class="a" style="left:922.5px;top:367px" width="10" height="10" viewBox="0 0 10 10"><path d="M1,2.5 L9,2.5 M4,2.5 L4,1 L6,1 L6,2.5" stroke="#cfcfcf" stroke-width="0.9" fill="none"/><path d="M2,3.5 L8,3.5 L7.5,9 L2.5,9 Z" fill="#cfcfcf"/></svg>
<div class="a" style="left:882px;top:375.5px;width:1.2px;height:1.2px;background:#ddd"></div>
<div class="a" id="menu">
<div class="a" style="left:1px;top:255.00px;width:116px;height:10.5px;background:#1473d0"></div>
<div class="mi" style="top:2.60px">New</div>
<div class="arr" style="top:4.50px"></div>
<div class="mi d" style="top:12.40px">Copy CSS</div>
<div class="mi d" style="top:22.40px">Copy SVG</div>
<div class="mi" style="top:32.60px">Duplicate Layers...</div>
<div class="mi" style="top:43.10px">Delete</div>
<div class="arr" style="top:45.00px"></div>
<div class="sep" style="top:54.60px"></div>
<div class="mi" style="top:58.90px">Quick Export as PNG</div>
<div class="sc" style="top:58.90px">Shift+Ctrl+&#39;</div>
<div class="mi" style="top:69.00px">Export As...</div>
<div class="sc" style="top:69.00px">Alt+Shift+Ctrl+&#39;</div>
<div class="sep" style="top:80.80px"></div>
<div class="mi" style="top:84.90px">Rename Layer...</div>
<div class="mi" style="top:95.20px">Layer Style</div>
<div class="arr" style="top:97.10px"></div>
<div class="mi d" style="top:105.60px">Smart Filter</div>
<div class="arr d" style="top:107.50px"></div>
<div class="sep" style="top:117.00px"></div>
<div class="mi" style="top:121.70px">New Fill Layer</div>
<div class="arr" style="top:123.60px"></div>
<div class="mi" style="top:131.85px">New Adjustment Layer</div>
<div class="arr" style="top:133.75px"></div>
<div class="mi d" style="top:141.50px">Layer Content Options...</div>
<div class="sep" style="top:153.65px"></div>
<div class="mi d" style="top:157.70px">Layer Mask</div>
<div class="arr d" style="top:159.60px"></div>
<div class="mi d" style="top:167.70px">Vector Mask</div>
<div class="arr d" style="top:169.60px"></div>
<div class="mi" style="top:177.70px">Create Clipping Mask</div>
<div class="sc" style="top:177.70px">Alt+Ctrl+G</div>
<div class="mi d" style="top:187.70px">Mask All Objects</div>
<div class="sep" style="top:200.15px"></div>
<div class="mi" style="top:204.35px">Smart Objects</div>
<div class="arr" style="top:206.25px"></div>
<div class="mi" style="top:214.60px">Video Layers</div>
<div class="arr" style="top:216.50px"></div>
<div class="mi" style="top:224.60px">Rasterize</div>
<div class="arr" style="top:226.50px"></div>
<div class="sep" style="top:236.40px"></div>
<div class="mi" style="top:239.85px">New Layer Based Slices</div>
<div class="mi w" style="top:256.20px">Group Layers</div>
<div class="sc w" style="top:256.20px">Ctrl+G</div>
<div class="mi d" style="top:266.50px">Ungroup Layers</div>
<div class="sc d" style="top:266.50px">Shift+Ctrl+G</div>
<div class="mi" style="top:276.70px">Hide Layers</div>
<div class="sc" style="top:276.70px">Ctrl+,</div>
<div class="sep" style="top:288.30px"></div>
<div class="mi" style="top:293.10px">Arrange</div>
<div class="arr" style="top:295.00px"></div>
<div class="mi" style="top:303.10px">Combine Shapes</div>
<div class="arr" style="top:305.00px"></div>
<div class="sep" style="top:314.15px"></div>
<div class="mi" style="top:319.00px">Align</div>
<div class="arr" style="top:320.90px"></div>
<div class="mi d" style="top:329.20px">Distribute</div>
<div class="arr d" style="top:331.10px"></div>
<div class="sep" style="top:340.80px"></div>
<div class="mi" style="top:344.85px">Lock Layers...</div>
<div class="sc" style="top:344.85px">Ctrl+/</div>
<div class="sep" style="top:356.15px"></div>
<div class="mi" style="top:360.85px">Link Layers</div>
<div class="mi d" style="top:371.10px">Select Linked Layers</div>
<div class="sep" style="top:382.90px"></div>
<div class="mi" style="top:387.10px">Merge Shapes</div>
<div class="mi" style="top:396.85px">Merge Visible</div>
<div class="sc" style="top:396.85px">Shift+Ctrl+E</div>
<div class="mi" style="top:407.10px">Flatten Image</div>
<div class="sep" style="top:419.15px"></div>
<div class="mi d" style="top:423.60px">Matting</div>
<div class="arr d" style="top:425.50px"></div>
</div>
<div class="a" style="left:71px;top:262px;width:120.5px;height:16px;border:2px solid #c81f2a;border-bottom-width:1.6px"></div>
</body></html>
